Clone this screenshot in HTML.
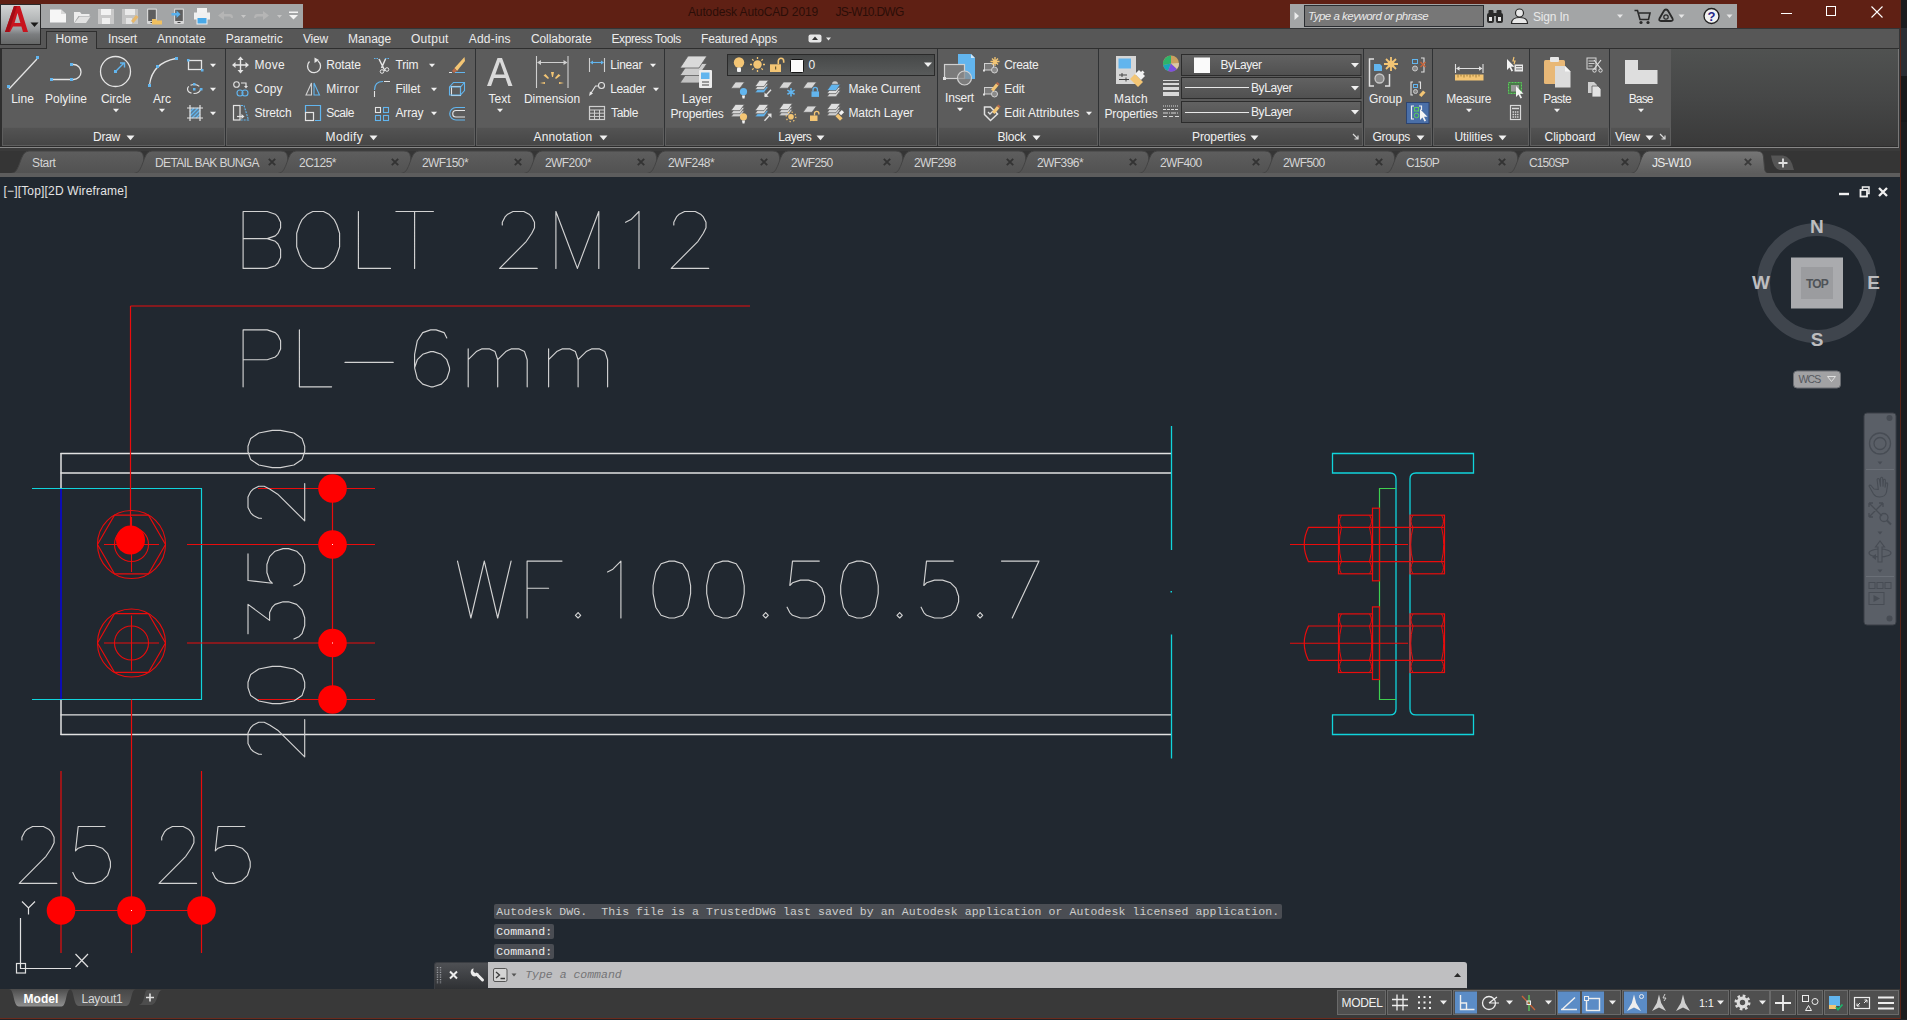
<!DOCTYPE html>
<html><head><meta charset="utf-8"><title>AutoCAD</title>
<style>
html,body{margin:0;padding:0;}
body{width:1907px;height:1020px;overflow:hidden;background:#1b1b1d;font-family:"Liberation Sans",sans-serif;position:relative;}
.t{position:absolute;white-space:pre;font-family:"Liberation Sans",sans-serif;}
.b{position:absolute;display:block;}
#win{position:absolute;left:0;top:0;width:1901px;height:1019px;overflow:hidden;background:#3b3b3b;}
</style></head><body>
<div id="win">
<div class="b" style="left:0px;top:0px;width:1901px;height:28px;background:#5f2014;"></div>
<div class="b" style="left:0px;top:28px;width:1901px;height:20px;background:#575757;border-top:1px solid #333537;box-sizing:border-box;"></div>
<div class="b" style="left:0px;top:4px;width:41px;height:41px;background:linear-gradient(#d2d4d4,#b2b5b6 40%,#9a9da0 62%,#7c7e80 75%,#666868);border:1px solid #2a2a2a;box-sizing:border-box;"></div>
<svg class="b" style="left:4px;top:5px;" width="26" height="30" viewBox="0 0 26 30"><path d="M1 27 L10 1 L16 1 L24 27 L19 27 L13.5 8 L10.5 18 L17 18 L18 21.5 L9 21.5 L6 27 Z" fill="#c8141e"/><path d="M10 1 L13 1 L5 27 L1 27 Z" fill="#a30d16"/></svg>
<svg class="b" style="left:30px;top:22px" width="9" height="6"><path d="M0.5 0.5 L8.5 0.5 L4.5 5 Z" fill="#1a1a1a"/></svg>
<div class="b" style="left:41px;top:4px;width:262px;height:24px;background:#a3a5a6;"></div>
<svg class="b" style="left:0px;top:0px;" width="310" height="30" viewBox="0 0 310 30"><path d="M50 9.500 h11 l5 4.500 v8.500 h-16z" fill="#f6f6f6"/><path d="M61 9.500 v4.500 h5z" fill="#d8d8d8"/><path d="M74 12 h6 l1.5 2 h8 v2 h-11 l-4.5 7z" fill="#ededed"/><path d="M79.500 16.500 h11 l-4.5 6.500 h-11.500z" fill="#e2e2e2"/><path d="M98 9 h16 v15 h-16z" fill="#c9c9c9"/><rect x="101" y="9" width="10" height="6" fill="#f2f2f2"/><rect x="102" y="18" width="8" height="6" fill="#efefef"/><path d="M122 9 h16 v15 h-16z" fill="#c4c4c4"/><rect x="125" y="9" width="10" height="6" fill="#eaeaea"/><rect x="126" y="18" width="6" height="6" fill="#e4e4e4"/><path d="M131 21 l5 -6 l2.500 2 l-5 6z" fill="#e8b86a"/><rect x="147" y="8.500" width="10" height="15.500" rx="1" fill="#d6d6d6"/><rect x="148.200" y="9.700" width="7.600" height="11.300" fill="#5e5e5e"/><rect x="150.500" y="22" width="3" height="1" fill="#444"/><path d="M152 19 h4 l1 1.500 h5 v4 h-10z" fill="#f0c060"/><rect x="174" y="8.500" width="10" height="15.500" rx="1" fill="#d6d6d6"/><rect x="175.200" y="9.700" width="7.600" height="11.300" fill="#5e5e5e"/><rect x="177.500" y="22" width="3" height="1" fill="#444"/><path d="M171.500 13 h5 v-2.500 l4 3.800 l-4 3.800 v-2.500 h-5z" fill="#58b0ec"/><rect x="197" y="8" width="10" height="5" fill="#f2f2f2"/><rect x="194" y="12.500" width="16" height="7" fill="#f0f0f0"/><rect x="197" y="17.500" width="10" height="6.500" fill="#49a9e8" stroke="#f0f0f0" stroke-width="1"/><path d="M218 15.500 l6 -4.500 v3 h6 q3 0 3 4 h-2 q0 -1.500 -1.500 -1.500 h-5.500 v3.500z" fill="#b5b5b5"/><path d="M241 15 l2.500 3 l2.500 -3z" fill="#c6c6c6"/><path d="M269 15.500 l-6 -4.500 v3 h-6 q-3 0 -3 4 h2 q0 -1.500 1.500 -1.500 h5.500 v3.500z" fill="#b5b5b5"/><path d="M277 15 l2.500 3 l2.500 -3z" fill="#c6c6c6"/><rect x="289" y="11.500" width="9" height="1.500" fill="#f4f4f4"/><path d="M289 15 h9 l-4.500 4.500z" fill="#f4f4f4"/></svg>
<span class="t" style="left:688.0px;top:4.6px;font-size:12px;color:#2b0e08;line-height:14.4px;letter-spacing:-0.13px;">Autodesk AutoCAD 2019</span>
<span class="t" style="left:835.5px;top:4.6px;font-size:12px;color:#2b0e08;line-height:14.4px;letter-spacing:-0.73px;">JS-W10.DWG</span>
<div class="b" style="left:1290px;top:4px;width:447px;height:24px;background:#a3a5a6;"></div>
<svg class="b" style="left:1293px;top:11px" width="8" height="10"><path d="M1.500 1 L6 5 L1.500 9z" fill="#ececec"/></svg>
<div class="b" style="left:1304px;top:5px;width:180px;height:22px;background:#777777;border:1px solid #2a2d31;box-sizing:border-box;"></div>
<span class="t" style="left:1308.0px;top:9.9px;font-size:11.5px;color:#e9e9e9;line-height:13.8px;letter-spacing:-0.50px;font-style:italic;">Type a keyword or phrase</span>
<svg class="b" style="left:0px;top:0px;" width="1760" height="30" viewBox="0 0 1760 30"><g fill="#2a2a2a"><rect x="1488.500" y="10" width="5" height="4" rx="1"/><rect x="1496.500" y="10" width="5" height="4" rx="1"/><rect x="1487" y="13" width="7" height="10" rx="2"/><rect x="1496" y="13" width="7" height="10" rx="2"/><rect x="1493" y="13" width="4" height="3"/></g><rect x="1489" y="17" width="3" height="4" fill="#e8e8e8"/><rect x="1498" y="17" width="3" height="4" fill="#e8e8e8"/><circle cx="1519.500" cy="13" r="4" fill="#e8e8e8" stroke="#2a2a2a" stroke-width="1.200"/><path d="M1511.500 23.500 q0 -6 8 -6 q8 0 8 6z" fill="#e8e8e8" stroke="#2a2a2a" stroke-width="1.200"/><path d="M1634.500 10.500 h3 l2.500 9 h8.500 l1.500 -6.500 h-11" fill="none" stroke="#2a2a2a" stroke-width="1.600"/><circle cx="1641" cy="22.500" r="1.600" fill="#2a2a2a"/><circle cx="1648" cy="22.500" r="1.600" fill="#2a2a2a"/><path d="M1666 9.500 q-1.500 0 -2.500 2 l-4 7 q-1 2.500 1.500 2.500 h10 q2.500 0 1.500 -2.500 l-4 -7 q-1 -2 -2.500 -2z" fill="none" stroke="#2a2a2a" stroke-width="1.800"/><circle cx="1666" cy="17" r="2.200" fill="none" stroke="#2a2a2a" stroke-width="1.200"/><circle cx="1711.500" cy="16" r="7.500" fill="#f2f2f2" stroke="#1f1f1f" stroke-width="1.300"/><path d="M1617 14.500 h6 l-3 3.500z" fill="#e6e6e6"/><path d="M1678.5 14.500 h6 l-3 3.500z" fill="#e6e6e6"/><path d="M1726.5 14.500 h6 l-3 3.500z" fill="#e6e6e6"/></svg>
<span class="t" style="left:1707.5px;top:9.0px;font-size:13px;color:#25258a;line-height:15.6px;font-weight:bold;">?</span>
<span class="t" style="left:1533.0px;top:9.6px;font-size:12px;color:#e9e9e9;line-height:14.4px;letter-spacing:-0.19px;">Sign In</span>
<svg class="b" style="left:1770px;top:0px;" width="130" height="28" viewBox="0 0 130 28"><path d="M11 13.500 h11" stroke="#fff" stroke-width="1"/><rect x="56.500" y="6.500" width="9" height="9" fill="none" stroke="#fff" stroke-width="1"/><path d="M101.500 6.500 l11 11 M112.500 6.500 l-11 11" stroke="#fff" stroke-width="1.100"/></svg>
<div class="b" style="left:46px;top:31px;width:51px;height:18px;background:#5c5c5c;border:1px solid #2e2e2e;border-bottom:none;box-sizing:border-box;"></div>
<span class="t" style="left:55.5px;top:31.6px;font-size:12px;color:#ececec;line-height:14.4px;letter-spacing:0.12px;">Home</span>
<span class="t" style="left:108.0px;top:31.6px;font-size:12px;color:#ececec;line-height:14.4px;letter-spacing:-0.17px;">Insert</span>
<span class="t" style="left:157.0px;top:31.6px;font-size:12px;color:#ececec;line-height:14.4px;letter-spacing:0.08px;">Annotate</span>
<span class="t" style="left:225.8px;top:31.6px;font-size:12px;color:#ececec;line-height:14.4px;letter-spacing:-0.13px;">Parametric</span>
<span class="t" style="left:303.0px;top:31.6px;font-size:12px;color:#ececec;line-height:14.4px;letter-spacing:-0.25px;">View</span>
<span class="t" style="left:348.0px;top:31.6px;font-size:12px;color:#ececec;line-height:14.4px;letter-spacing:-0.06px;">Manage</span>
<span class="t" style="left:411.0px;top:31.6px;font-size:12px;color:#ececec;line-height:14.4px;letter-spacing:0.28px;">Output</span>
<span class="t" style="left:468.8px;top:31.6px;font-size:12px;color:#ececec;line-height:14.4px;letter-spacing:0.19px;">Add-ins</span>
<span class="t" style="left:530.9px;top:31.6px;font-size:12px;color:#ececec;line-height:14.4px;letter-spacing:-0.06px;">Collaborate</span>
<span class="t" style="left:611.4px;top:31.6px;font-size:12px;color:#ececec;line-height:14.4px;letter-spacing:-0.38px;">Express Tools</span>
<span class="t" style="left:701.0px;top:31.6px;font-size:12px;color:#ececec;line-height:14.4px;letter-spacing:-0.16px;">Featured Apps</span>
<svg class="b" style="left:806px;top:33px;" width="30" height="12" viewBox="0 0 30 12"><rect x="2.500" y="1.500" width="13" height="8" rx="2" fill="#e6e6e6"/><path d="M6 7 l3 -3.500 l3 3.500z" fill="#333"/><path d="M20 4.500 h5 l-2.500 3z" fill="#e6e6e6"/></svg>
<div class="b" style="left:0px;top:48px;width:1901px;height:100px;background:linear-gradient(#505251,#464747 50%,#393939);"></div>
<div class="b" style="left:0px;top:48px;width:1901px;height:1px;background:#2e2e2e;"></div>
<div class="b" style="left:0px;top:146px;width:1901px;height:1px;background:#2c2c2c;"></div>
<div class="b" style="left:0px;top:147px;width:1901px;height:1px;background:#878787;"></div>
<div class="b" style="left:0px;top:148px;width:1901px;height:3px;background:#3a3a3a;"></div>
<div class="b" style="left:0px;top:48px;width:2px;height:99px;background:#2e2e2e;"></div>
<div class="b" style="left:1898px;top:49px;width:1px;height:98px;background:#787878;"></div>
<div class="b" style="left:1899px;top:28px;width:1px;height:120px;background:#333537;"></div>
<div class="b" style="left:2px;top:49px;width:223px;height:78px;background:#5c5c5c;"></div>
<div class="b" style="left:2px;top:127px;width:223px;height:19px;background:linear-gradient(#535353,#464646);border:1px solid #5e5e5e;border-top:1px solid #5a5a5a;box-sizing:border-box;"></div>
<div class="b" style="left:225px;top:49px;width:1px;height:97px;background:#303234;"></div>
<span class="t" style="left:93.0px;top:129.6px;font-size:12px;color:#f0f0f0;line-height:14.4px;letter-spacing:-0.25px;">Draw</span>
<svg class="b" style="left:125.5px;top:134.5px" width="9" height="6" viewBox="0 0 9 6"><path d="M0.5 0.6 L8.5 0.6 L4.5 5.2 Z" fill="#f0f0f0"/></svg>
<div class="b" style="left:226px;top:49px;width:249px;height:78px;background:#5c5c5c;"></div>
<div class="b" style="left:226px;top:127px;width:249px;height:19px;background:linear-gradient(#535353,#464646);border:1px solid #5e5e5e;border-top:1px solid #5a5a5a;box-sizing:border-box;"></div>
<div class="b" style="left:475px;top:49px;width:1px;height:97px;background:#303234;"></div>
<span class="t" style="left:325.5px;top:129.6px;font-size:12px;color:#f0f0f0;line-height:14.4px;letter-spacing:0.38px;">Modify</span>
<svg class="b" style="left:368.8px;top:134.5px" width="9" height="6" viewBox="0 0 9 6"><path d="M0.5 0.6 L8.5 0.6 L4.5 5.2 Z" fill="#f0f0f0"/></svg>
<div class="b" style="left:476px;top:49px;width:188px;height:78px;background:#5c5c5c;"></div>
<div class="b" style="left:476px;top:127px;width:188px;height:19px;background:linear-gradient(#535353,#464646);border:1px solid #5e5e5e;border-top:1px solid #5a5a5a;box-sizing:border-box;"></div>
<div class="b" style="left:664px;top:49px;width:1px;height:97px;background:#303234;"></div>
<span class="t" style="left:533.6px;top:129.6px;font-size:12px;color:#f0f0f0;line-height:14.4px;letter-spacing:0.13px;">Annotation</span>
<svg class="b" style="left:598.7px;top:134.5px" width="9" height="6" viewBox="0 0 9 6"><path d="M0.5 0.6 L8.5 0.6 L4.5 5.2 Z" fill="#f0f0f0"/></svg>
<div class="b" style="left:665px;top:49px;width:272px;height:78px;background:#5c5c5c;"></div>
<div class="b" style="left:665px;top:127px;width:272px;height:19px;background:linear-gradient(#535353,#464646);border:1px solid #5e5e5e;border-top:1px solid #5a5a5a;box-sizing:border-box;"></div>
<div class="b" style="left:937px;top:49px;width:1px;height:97px;background:#303234;"></div>
<span class="t" style="left:778.3px;top:129.6px;font-size:12px;color:#f0f0f0;line-height:14.4px;letter-spacing:-0.50px;">Layers</span>
<svg class="b" style="left:816px;top:134.5px" width="9" height="6" viewBox="0 0 9 6"><path d="M0.5 0.6 L8.5 0.6 L4.5 5.2 Z" fill="#f0f0f0"/></svg>
<div class="b" style="left:938px;top:49px;width:160px;height:78px;background:#5c5c5c;"></div>
<div class="b" style="left:938px;top:127px;width:160px;height:19px;background:linear-gradient(#535353,#464646);border:1px solid #5e5e5e;border-top:1px solid #5a5a5a;box-sizing:border-box;"></div>
<div class="b" style="left:1098px;top:49px;width:1px;height:97px;background:#303234;"></div>
<span class="t" style="left:997.4px;top:129.6px;font-size:12px;color:#f0f0f0;line-height:14.4px;letter-spacing:-0.17px;">Block</span>
<svg class="b" style="left:1031.5px;top:134.5px" width="9" height="6" viewBox="0 0 9 6"><path d="M0.5 0.6 L8.5 0.6 L4.5 5.2 Z" fill="#f0f0f0"/></svg>
<div class="b" style="left:1099px;top:49px;width:264px;height:78px;background:#5c5c5c;"></div>
<div class="b" style="left:1099px;top:127px;width:264px;height:19px;background:linear-gradient(#535353,#464646);border:1px solid #5e5e5e;border-top:1px solid #5a5a5a;box-sizing:border-box;"></div>
<div class="b" style="left:1363px;top:49px;width:1px;height:97px;background:#303234;"></div>
<span class="t" style="left:1192.0px;top:129.6px;font-size:12px;color:#f0f0f0;line-height:14.4px;letter-spacing:-0.10px;">Properties</span>
<svg class="b" style="left:1250.3px;top:134.5px" width="9" height="6" viewBox="0 0 9 6"><path d="M0.5 0.6 L8.5 0.6 L4.5 5.2 Z" fill="#f0f0f0"/></svg>
<div class="b" style="left:1364px;top:49px;width:68px;height:78px;background:#5c5c5c;"></div>
<div class="b" style="left:1364px;top:127px;width:68px;height:19px;background:linear-gradient(#535353,#464646);border:1px solid #5e5e5e;border-top:1px solid #5a5a5a;box-sizing:border-box;"></div>
<div class="b" style="left:1432px;top:49px;width:1px;height:97px;background:#303234;"></div>
<span class="t" style="left:1372.5px;top:129.6px;font-size:12px;color:#f0f0f0;line-height:14.4px;letter-spacing:-0.31px;">Groups</span>
<svg class="b" style="left:1415.5px;top:134.5px" width="9" height="6" viewBox="0 0 9 6"><path d="M0.5 0.6 L8.5 0.6 L4.5 5.2 Z" fill="#f0f0f0"/></svg>
<div class="b" style="left:1433px;top:49px;width:96px;height:78px;background:#5c5c5c;"></div>
<div class="b" style="left:1433px;top:127px;width:96px;height:19px;background:linear-gradient(#535353,#464646);border:1px solid #5e5e5e;border-top:1px solid #5a5a5a;box-sizing:border-box;"></div>
<div class="b" style="left:1529px;top:49px;width:1px;height:97px;background:#303234;"></div>
<span class="t" style="left:1454.4px;top:129.6px;font-size:12px;color:#f0f0f0;line-height:14.4px;letter-spacing:-0.03px;">Utilities</span>
<svg class="b" style="left:1498.3px;top:134.5px" width="9" height="6" viewBox="0 0 9 6"><path d="M0.5 0.6 L8.5 0.6 L4.5 5.2 Z" fill="#f0f0f0"/></svg>
<div class="b" style="left:1530px;top:49px;width:79px;height:78px;background:#5c5c5c;"></div>
<div class="b" style="left:1530px;top:127px;width:79px;height:19px;background:linear-gradient(#535353,#464646);border:1px solid #5e5e5e;border-top:1px solid #5a5a5a;box-sizing:border-box;"></div>
<div class="b" style="left:1609px;top:49px;width:1px;height:97px;background:#303234;"></div>
<span class="t" style="left:1544.5px;top:129.6px;font-size:12px;color:#f0f0f0;line-height:14.4px;letter-spacing:-0.04px;">Clipboard</span>
<div class="b" style="left:1610px;top:49px;width:61px;height:78px;background:#5c5c5c;"></div>
<div class="b" style="left:1610px;top:127px;width:61px;height:19px;background:linear-gradient(#535353,#464646);border:1px solid #5e5e5e;border-top:1px solid #5a5a5a;box-sizing:border-box;"></div>
<span class="t" style="left:1615.0px;top:129.6px;font-size:12px;color:#f0f0f0;line-height:14.4px;letter-spacing:-0.27px;">View</span>
<svg class="b" style="left:1645.3px;top:134.5px" width="9" height="6" viewBox="0 0 9 6"><path d="M0.5 0.6 L8.5 0.6 L4.5 5.2 Z" fill="#f0f0f0"/></svg>
<svg class="b" style="left:1352px;top:133px;" width="8" height="8" viewBox="0 0 8 8"><path d="M1 1 L6 6 M6 2.500 V6 H2.500" stroke="#d8d8d8" stroke-width="1.200" fill="none"/></svg>
<svg class="b" style="left:1659px;top:133px;" width="8" height="8" viewBox="0 0 8 8"><path d="M1 1 L6 6 M6 2.500 V6 H2.500" stroke="#d8d8d8" stroke-width="1.200" fill="none"/></svg>
<div class="b" style="left:47px;top:47px;width:49px;height:2px;background:#5c5c5c;"></div>
<svg class="b" style="left:0px;top:0px;" width="224" height="128" viewBox="0 0 224 128"><path d="M9 89 L37 59" stroke="#e4e4e4" stroke-width="1.300"/><rect x="7" y="85" width="3" height="3" fill="#62b5ee"/><rect x="36" y="56" width="3" height="3" fill="#62b5ee"/><path d="M52 79.500 H71 M71.500 64.500 h2 a7.500 7.500 0 0 1 0 15 h-2" stroke="#e4e4e4" stroke-width="1.300" fill="none"/><rect x="50" y="78" width="3" height="3" fill="#62b5ee"/><rect x="70" y="78" width="3" height="3" fill="#62b5ee"/><rect x="70" y="63" width="3" height="3" fill="#62b5ee"/><circle cx="115.500" cy="71.500" r="15" stroke="#e4e4e4" stroke-width="1.300" fill="none"/><path d="M116 71 L124 63 M120 63 h4.500 v4.500" stroke="#62b5ee" stroke-width="1.400" fill="none"/><rect x="114" y="70" width="3" height="3" fill="#62b5ee"/><path d="M149.500 85 Q152 63 176 58.500" stroke="#e4e4e4" stroke-width="1.300" fill="none"/><rect x="148" y="84" width="3" height="3" fill="#62b5ee"/><rect x="156" y="65" width="3" height="3" fill="#62b5ee"/><rect x="175" y="57" width="3" height="3" fill="#62b5ee"/><rect x="188.500" y="60.500" width="13" height="9" stroke="#e4e4e4" stroke-width="1.300" fill="none"/><rect x="187" y="59" width="2.500" height="2.500" fill="#62b5ee"/><rect x="201" y="69" width="2.500" height="2.500" fill="#62b5ee"/><ellipse cx="194" cy="89" rx="6.500" ry="4.500" stroke="#e4e4e4" stroke-width="1.200" fill="none" stroke-dasharray="9 2"/><rect x="193" y="83" width="2.500" height="2.500" fill="#62b5ee"/><rect x="193" y="88" width="2.500" height="2.500" fill="#62b5ee"/><rect x="200" y="88" width="2.500" height="2.500" fill="#62b5ee"/><rect x="190" y="108" width="10" height="10" fill="#5f7d94"/><path d="M190 112 l4 -4 M190 116 l8 -8 M192 118 l8 -8 M196 118 l4 -4" stroke="#62b5ee" stroke-width="1.300"/><path d="M187 108 h16 M187 118 h16 M190 105 v16 M200 105 v16" stroke="#e4e4e4" stroke-width="1.200"/></svg>
<span class="t" style="left:11.2px;top:91.6px;font-size:12px;color:#f0f0f0;line-height:14.4px;">Line</span>
<span class="t" style="left:45.0px;top:91.6px;font-size:12px;color:#f0f0f0;line-height:14.4px;letter-spacing:-0.00px;">Polyline</span>
<span class="t" style="left:101.0px;top:91.6px;font-size:12px;color:#f0f0f0;line-height:14.4px;letter-spacing:-0.11px;">Circle</span>
<span class="t" style="left:153.0px;top:91.6px;font-size:12px;color:#f0f0f0;line-height:14.4px;">Arc</span>
<svg class="b" style="left:111.5px;top:108px" width="8" height="5" viewBox="0 0 8 5"><path d="M1 0.8 L7 0.8 L4 4.2 Z" fill="#f0f0f0"/></svg>
<svg class="b" style="left:157.5px;top:108px" width="8" height="5" viewBox="0 0 8 5"><path d="M1 0.8 L7 0.8 L4 4.2 Z" fill="#f0f0f0"/></svg>
<svg class="b" style="left:208.5px;top:63px" width="8" height="5" viewBox="0 0 8 5"><path d="M1 0.8 L7 0.8 L4 4.2 Z" fill="#f0f0f0"/></svg>
<svg class="b" style="left:208.5px;top:87px" width="8" height="5" viewBox="0 0 8 5"><path d="M1 0.8 L7 0.8 L4 4.2 Z" fill="#f0f0f0"/></svg>
<svg class="b" style="left:208.5px;top:111px" width="8" height="5" viewBox="0 0 8 5"><path d="M1 0.8 L7 0.8 L4 4.2 Z" fill="#f0f0f0"/></svg>
<svg class="b" style="left:0px;top:0px;" width="480" height="128" viewBox="0 0 480 128"><path d="M240.500 58 v14 M233.500 65 h14" stroke="#e4e4e4" stroke-width="1.400"/><path d="M240.500 56.500 l-3 3.500 h6z M240.500 73.500 l-3 -3.500 h6z M232 65 l3.500 -3 v6z M249 65 l-3.500 -3 v6z" fill="#e4e4e4"/><circle cx="236.500" cy="84.500" r="2.800" stroke="#e4e4e4" stroke-width="1.100" fill="none"/><path d="M241 83 h5 v3.500" stroke="#e4e4e4" stroke-width="1.200" fill="none"/><path d="M246 88.500 l-2 -2.500 h4z" fill="#e4e4e4"/><circle cx="240" cy="93" r="3" stroke="#62b5ee" stroke-width="1.100" fill="none"/><circle cx="245" cy="93" r="3" stroke="#62b5ee" stroke-width="1.100" fill="none"/><rect x="233.500" y="105.500" width="6.500" height="14.500" stroke="#e4e4e4" stroke-width="1.200" fill="none"/><path d="M241 105.500 h3 l4.500 14.500 h-7.500" stroke="#62b5ee" stroke-width="1.100" fill="none" stroke-dasharray="2 1"/><path d="M237 116.500 h5" stroke="#e4e4e4" stroke-width="1.200"/><path d="M244.500 116.500 l-3 -2.500 v5z" fill="#e4e4e4"/><path d="M318 60 a6.500 6.500 0 1 1 -8.500 0.500" stroke="#e4e4e4" stroke-width="1.300" fill="none" transform="translate(0 1)"/><path d="M314.500 57.500 l4.500 2.500 l-4.500 3z" fill="#e4e4e4"/><path d="M311.500 83 v12 h-5.500z" stroke="#cfcfcf" stroke-width="1.100" fill="none"/><path d="M314 83 v12 h5.500z" stroke="#62b5ee" stroke-width="1.100" fill="none"/><path d="M305.500 112 v-6.500 h15 v15 h-5.500" stroke="#62b5ee" stroke-width="1.200" fill="none"/><rect x="305.500" y="112.500" width="8" height="8" stroke="#e4e4e4" stroke-width="1.200" fill="none"/><path d="M374 58.500 h5 M385 58.500 h5" stroke="#62b5ee" stroke-width="1.100" stroke-dasharray="1.500 1"/><path d="M379 59 l6 12 M385.500 59 l-4 9" stroke="#e4e4e4" stroke-width="1.500" fill="none"/><circle cx="382" cy="71.500" r="1.800" stroke="#e4e4e4" stroke-width="1" fill="none"/><circle cx="387" cy="69.500" r="1.800" stroke="#e4e4e4" stroke-width="1" fill="none"/><path d="M374.500 90 q0 -8.500 8.500 -8.500" stroke="#62b5ee" stroke-width="1.200" fill="none"/><path d="M384 81.500 h6 M374.500 91 v6" stroke="#e4e4e4" stroke-width="1.100"/><rect x="375.500" y="107.500" width="5" height="5" stroke="#e4e4e4" stroke-width="1.100" fill="none"/><rect x="383.500" y="107.500" width="5" height="5" stroke="#62b5ee" stroke-width="1.100" fill="none"/><rect x="375.500" y="115.500" width="5" height="5" stroke="#62b5ee" stroke-width="1.100" fill="none"/><rect x="383.500" y="115.500" width="5" height="5" stroke="#62b5ee" stroke-width="1.100" fill="none"/><path d="M464.500 57 l-10 11 l2.500 3 l8 -10z" fill="#f3c574"/><path d="M454.500 68 l2.500 3 l-3 2 l-2 -2z" fill="#b86a4a"/><path d="M449 72.500 h3" stroke="#e4e4e4" stroke-width="1"/><path d="M455 72.500 h10" stroke="#62b5ee" stroke-width="1"/><rect x="451.500" y="86.500" width="9" height="9" stroke="#e4e4e4" stroke-width="1.100" fill="none"/><path d="M449.500 95 v-8 l4 -4.500 h11 v8 l-4 4.500z M453.500 82.500 M449.500 87 h11 l4 -4.500 M460.500 87 v8.500" stroke="#62b5ee" stroke-width="1.100" fill="none"/><path d="M465 107.500 h-9 a6 6 0 0 0 0 12.500 h9" stroke="#62b5ee" stroke-width="1.200" fill="none"/><path d="M465 110.500 h-9 a3 3 0 0 0 0 6.500 h9" stroke="#e4e4e4" stroke-width="1.200" fill="none"/></svg>
<span class="t" style="left:254.4px;top:58.1px;font-size:12px;color:#f0f0f0;line-height:14.4px;letter-spacing:0.29px;">Move</span>
<span class="t" style="left:254.4px;top:82.1px;font-size:12px;color:#f0f0f0;line-height:14.4px;letter-spacing:-0.00px;">Copy</span>
<span class="t" style="left:254.4px;top:106.1px;font-size:12px;color:#f0f0f0;line-height:14.4px;letter-spacing:-0.14px;">Stretch</span>
<span class="t" style="left:326.3px;top:58.1px;font-size:12px;color:#f0f0f0;line-height:14.4px;letter-spacing:-0.14px;">Rotate</span>
<span class="t" style="left:326.3px;top:82.1px;font-size:12px;color:#f0f0f0;line-height:14.4px;letter-spacing:0.28px;">Mirror</span>
<span class="t" style="left:326.3px;top:106.1px;font-size:12px;color:#f0f0f0;line-height:14.4px;letter-spacing:-0.50px;">Scale</span>
<span class="t" style="left:395.4px;top:58.1px;font-size:12px;color:#f0f0f0;line-height:14.4px;letter-spacing:-0.14px;">Trim</span>
<span class="t" style="left:395.4px;top:82.1px;font-size:12px;color:#f0f0f0;line-height:14.4px;letter-spacing:-0.06px;">Fillet</span>
<span class="t" style="left:395.4px;top:106.1px;font-size:12px;color:#f0f0f0;line-height:14.4px;letter-spacing:-0.13px;">Array</span>
<svg class="b" style="left:427.5px;top:63px" width="8" height="5" viewBox="0 0 8 5"><path d="M1 0.8 L7 0.8 L4 4.2 Z" fill="#f0f0f0"/></svg>
<svg class="b" style="left:429.5px;top:87px" width="8" height="5" viewBox="0 0 8 5"><path d="M1 0.8 L7 0.8 L4 4.2 Z" fill="#f0f0f0"/></svg>
<svg class="b" style="left:429.5px;top:111px" width="8" height="5" viewBox="0 0 8 5"><path d="M1 0.8 L7 0.8 L4 4.2 Z" fill="#f0f0f0"/></svg>
<svg class="b" style="left:0px;top:0px;" width="670" height="128" viewBox="0 0 670 128"><path d="M487 86 L497.500 58 h4.500 L512.500 86 h-4.200 l-2.800 -8 h-11.600 l-2.800 8z M495.300 74.500 h9.200 l-4.600 -12.800z" fill="#d9d9d9" fill-rule="evenodd"/><path d="M536.500 56 v32 M568 56 v32 M538 62.500 h28.500" stroke="#cfcfcf" stroke-width="1.100"/><path d="M537 62.500 l4 -2.500 v5z M567.500 62.500 l-4 -2.500 v5z" fill="#cfcfcf"/><g fill="#f3c574"><path d="M551 72 l1 5 h1 l1 -5z"/><path d="M543.500 75.500 l4.500 3.500 l1 -1 l-3.500 -4z"/><path d="M560.500 75.500 l-4.500 3.500 l-1 -1 l3.500 -4z"/><path d="M540 83 l5 -1 v2z"/><path d="M564 83 l-5 -1 v2z"/></g><path d="M589.500 58 v14 M604.500 58 v14" stroke="#cfcfcf" stroke-width="1.100"/><path d="M591 62.500 h12" stroke="#62b5ee" stroke-width="1.100"/><path d="M590 62.500 l3 -2 v4z M604 62.500 l-3 -2 v4z" fill="#62b5ee"/><circle cx="601.500" cy="85.500" r="3" stroke="#e4e4e4" stroke-width="1.100" fill="none"/><path d="M598.500 86 h-3 l-5 8" stroke="#e4e4e4" stroke-width="1.100" fill="none"/><path d="M589 96 l1 -4.500 l3 2z" fill="#e4e4e4"/><rect x="589.500" y="106.500" width="15" height="13" stroke="#cfcfcf" stroke-width="1.200" fill="none"/><path d="M589.500 110 h15 M589.500 113.200 h15 M589.500 116.400 h15 M594.500 110 v9.500 M599.500 110 v9.500" stroke="#cfcfcf" stroke-width="1"/></svg>
<span class="t" style="left:488.5px;top:91.6px;font-size:12px;color:#f0f0f0;line-height:14.4px;">Text</span>
<span class="t" style="left:524.0px;top:91.6px;font-size:12px;color:#f0f0f0;line-height:14.4px;letter-spacing:-0.08px;">Dimension</span>
<span class="t" style="left:610.3px;top:58.1px;font-size:12px;color:#f0f0f0;line-height:14.4px;letter-spacing:-0.23px;">Linear</span>
<span class="t" style="left:610.3px;top:82.1px;font-size:12px;color:#f0f0f0;line-height:14.4px;letter-spacing:-0.39px;">Leader</span>
<span class="t" style="left:611.0px;top:106.1px;font-size:12px;color:#f0f0f0;line-height:14.4px;letter-spacing:-0.34px;">Table</span>
<svg class="b" style="left:495.5px;top:108px" width="8" height="5" viewBox="0 0 8 5"><path d="M1 0.8 L7 0.8 L4 4.2 Z" fill="#f0f0f0"/></svg>
<svg class="b" style="left:648.5px;top:63px" width="8" height="5" viewBox="0 0 8 5"><path d="M1 0.8 L7 0.8 L4 4.2 Z" fill="#f0f0f0"/></svg>
<svg class="b" style="left:651.5px;top:87px" width="8" height="5" viewBox="0 0 8 5"><path d="M1 0.8 L7 0.8 L4 4.2 Z" fill="#f0f0f0"/></svg>
<svg class="b" style="left:0px;top:0px;" width="940" height="128" viewBox="0 0 940 128"><defs><linearGradient id="lg" x1="0" y1="0" x2="0" y2="1"><stop offset="0" stop-color="#464848"/><stop offset="1" stop-color="#595b5b"/></linearGradient></defs><path d="M680 83 l8 -12 h19 l-8 12z" fill="#c2c2c2" stroke="#5c5c5c" stroke-width="0.800"/><path d="M680 75.5 l8 -12 h19 l-8 12z" fill="#cdcdcd" stroke="#5c5c5c" stroke-width="0.800"/><path d="M680 68 l8 -12 h19 l-8 12z" fill="#dadada" stroke="#5c5c5c" stroke-width="0.800"/><rect x="699" y="70" width="13" height="18" rx="1" fill="#ececec"/><rect x="701" y="72.500" width="8.500" height="6.500" fill="#62b5ee"/><path d="M702 82 h7 M702 85 h7" stroke="#444" stroke-width="1"/><rect x="727.500" y="54.500" width="207" height="21" fill="url(#lg)" stroke="#2a2a2a"/><circle cx="739" cy="62.500" r="5.200" fill="#f3c574"/><rect x="737" y="67.500" width="4" height="4.500" rx="1" fill="#f2f2f2"/><circle cx="757.500" cy="64.500" r="4.200" fill="#f3c574"/><path d="M757.500 57 v2 M757.500 70 v2 M750 64.500 h2 M763 64.500 h2 M752.200 59.200 l1.400 1.400 M761.400 68.400 l1.400 1.400 M762.800 59.200 l-1.400 1.400 M753.600 68.400 l-1.400 1.400" stroke="#f3c574" stroke-width="1.300"/><rect x="770" y="64.300" width="11" height="7.700" fill="#f3c574"/><rect x="775" y="66.500" width="1.200" height="3" fill="#6a5a30"/><path d="M778.300 64.300 v-3.300 a2.700 2.700 0 0 1 5.400 0 v1.700" stroke="#f3c574" stroke-width="1.600" fill="none"/><rect x="790.500" y="59.500" width="13" height="13" rx="1" fill="#fbfbfb" stroke="#151515" stroke-width="1"/><path d="M924 62.500 h8 l-4 4.500z" fill="#f0f0f0"/><path d="M731 88.2 l4.500 -6.200 h9 l-4.500 6.200z" fill="#d6d6d6" stroke="#5c5c5c" stroke-width="0.700"/><circle cx="743.5" cy="91.7" r="3.600" fill="#62b5ee"/><path d="M742 95.5 h3 l-0.500 3 h-2z" fill="#f2f2f2"/><path d="M755 92.7 l4.500 -6.200 h9 l-4.500 6.200z" fill="#62b5ee" stroke="#5c5c5c" stroke-width="0.700"/><path d="M755 89.6 l4.500 -6.200 h9 l-4.500 6.200z" fill="#d6d6d6" stroke="#5c5c5c" stroke-width="0.700"/><path d="M755 86.5 l4.500 -6.200 h9 l-4.500 6.200z" fill="#dedede" stroke="#5c5c5c" stroke-width="0.700"/><path d="M771 89.7 l-6 6.500" stroke="#e4e4e4" stroke-width="1.300"/><path d="M764.5 97 v-4.500 l4.200 4.200z" fill="#e4e4e4"/><path d="M779 88.2 l4.500 -6.200 h9 l-4.500 6.200z" fill="#d6d6d6" stroke="#5c5c5c" stroke-width="0.700"/><path d="M791 88 v8.400 M787.4 90.1 l7.200 4.200 M787.4 94.3 l7.200 -4.200" stroke="#62b5ee" stroke-width="1.600"/><path d="M803 88.2 l4.500 -6.200 h9 l-4.500 6.200z" fill="#d6d6d6" stroke="#5c5c5c" stroke-width="0.700"/><rect x="811.5" y="91.4" width="7.500" height="5.500" fill="#62b5ee"/><path d="M813.05 91.6 v-2 a2.200 2.200 0 0 1 4.400 0 v2" stroke="#62b5ee" stroke-width="1.300" fill="none"/><circle cx="835" cy="84.2" r="3" fill="#c9c9c9"/><path d="M827 96.7 l4.500 -6.200 h9 l-4.500 6.200z" fill="#d6d6d6" stroke="#5c5c5c" stroke-width="0.700"/><path d="M827 93.6 l4.500 -6.200 h9 l-4.500 6.200z" fill="#dedede" stroke="#5c5c5c" stroke-width="0.700"/><path d="M827 90.5 l4.500 -6.200 h9 l-4.500 6.200z" fill="#62b5ee" stroke="#5c5c5c" stroke-width="0.700"/><path d="M731 116.8 l4.500 -6.200 h9 l-4.500 6.200z" fill="#cfcfcf" stroke="#5c5c5c" stroke-width="0.700"/><path d="M731 113.7 l4.500 -6.200 h9 l-4.500 6.200z" fill="#d6d6d6" stroke="#5c5c5c" stroke-width="0.700"/><path d="M731 110.6 l4.500 -6.200 h9 l-4.500 6.200z" fill="#dedede" stroke="#5c5c5c" stroke-width="0.700"/><circle cx="743.5" cy="116.8" r="3.600" fill="#f3c574"/><path d="M742 120.6 h3 l-0.500 3 h-2z" fill="#f2f2f2"/><path d="M755 116.8 l4.500 -6.200 h9 l-4.500 6.200z" fill="#62b5ee" stroke="#5c5c5c" stroke-width="0.700"/><path d="M755 113.7 l4.500 -6.200 h9 l-4.500 6.200z" fill="#d6d6d6" stroke="#5c5c5c" stroke-width="0.700"/><path d="M755 110.6 l4.500 -6.200 h9 l-4.500 6.200z" fill="#dedede" stroke="#5c5c5c" stroke-width="0.700"/><path d="M764.5 120.8 l6 -6.500" stroke="#e4e4e4" stroke-width="1.300"/><path d="M771.5 113.5 v4.500 l-4.200 -4.200z" fill="#e4e4e4"/><path d="M779 115.8 l4.500 -6.200 h9 l-4.500 6.200z" fill="#cfcfcf" stroke="#5c5c5c" stroke-width="0.700"/><path d="M779 112.7 l4.500 -6.200 h9 l-4.500 6.200z" fill="#d6d6d6" stroke="#5c5c5c" stroke-width="0.700"/><path d="M779 109.6 l4.500 -6.200 h9 l-4.500 6.200z" fill="#dedede" stroke="#5c5c5c" stroke-width="0.700"/><circle cx="791" cy="116.8" r="2.800" fill="#f3c574"/><circle cx="791" cy="116.8" r="4.800" fill="none" stroke="#f3c574" stroke-width="1.300" stroke-dasharray="1.300 2.470"/><path d="M803 112.3 l4.500 -6.200 h9 l-4.500 6.200z" fill="#d6d6d6" stroke="#5c5c5c" stroke-width="0.700"/><rect x="810" y="115.5" width="7.500" height="5.500" fill="#f3c574"/><path d="M814.5 115.5 v-2 a2.200 2.200 0 0 1 4.400 0 v1" stroke="#f3c574" stroke-width="1.300" fill="none"/><path d="M827 115.8 l4.500 -6.200 h9 l-4.500 6.200z" fill="#cfcfcf" stroke="#5c5c5c" stroke-width="0.700"/><path d="M827 112.7 l4.500 -6.200 h9 l-4.500 6.200z" fill="#d6d6d6" stroke="#5c5c5c" stroke-width="0.700"/><path d="M827 109.6 l4.500 -6.200 h9 l-4.500 6.200z" fill="#dedede" stroke="#5c5c5c" stroke-width="0.700"/><path d="M835.5 116.3 l4.500 4.500 l2.600 -2.600 l-4.500 -4.500z" fill="#f3c574"/><path d="M838.8 113 l3 -3 l2.300 2.300 l-3 3z" fill="#f4f4f4"/></svg>
<span class="t" style="left:808.5px;top:58.1px;font-size:12px;color:#f0f0f0;line-height:14.4px;">0</span>
<span class="t" style="left:682.0px;top:92.1px;font-size:12px;color:#f0f0f0;line-height:14.4px;">Layer</span>
<span class="t" style="left:670.5px;top:107.1px;font-size:12px;color:#f0f0f0;line-height:14.4px;letter-spacing:-0.17px;">Properties</span>
<span class="t" style="left:848.4px;top:82.1px;font-size:12px;color:#f0f0f0;line-height:14.4px;letter-spacing:-0.06px;">Make Current</span>
<span class="t" style="left:848.4px;top:106.1px;font-size:12px;color:#f0f0f0;line-height:14.4px;letter-spacing:-0.09px;">Match Layer</span>
<svg class="b" style="left:0px;top:0px;" width="1100" height="128" viewBox="0 0 1100 128"><path d="M958 54 h13 l4 4 v21 h-17z" fill="#62b5ee"/><path d="M971 54 v4 h4z" fill="#cfe6f8"/><rect x="944.500" y="64.500" width="20" height="14" fill="#7a7a7a" stroke="#d0d0d0" stroke-width="1.200"/><circle cx="964.500" cy="78" r="7" fill="#8a8a8a" fill-opacity="0.7" stroke="#d0d0d0" stroke-width="1.200"/><rect x="943" y="77" width="3" height="3" fill="#e0e0e0"/><rect x="984.500" y="63.5" width="9" height="6.500" fill="#7a7a7a" stroke="#d0d0d0" stroke-width="1"/><circle cx="994.500" cy="70" r="3" fill="#8a8a8a" stroke="#d0d0d0" stroke-width="1"/><rect x="983" y="69.5" width="2" height="2" fill="#e0e0e0"/><rect x="984.500" y="87.5" width="9" height="6.500" fill="#7a7a7a" stroke="#d0d0d0" stroke-width="1"/><circle cx="994.500" cy="94" r="3" fill="#8a8a8a" stroke="#d0d0d0" stroke-width="1"/><rect x="983" y="93.5" width="2" height="2" fill="#e0e0e0"/><path d="M995 57 v9 M990.500 61.500 h9 M992 58.500 l6 6 M998 58.500 l-6 6" stroke="#f3c574" stroke-width="1.300"/><path d="M991 89.500 l5 -6 l2.500 2 l-5 6z" fill="#f3c574"/><path d="M996 83.500 l1.200 -1.500 l2.500 2 l-1.200 1.500z" fill="#b86a4a"/><path d="M984.500 107 h6 l7 7 l-7 6.500 l-6 -6z" stroke="#e0e0e0" stroke-width="1.500" fill="none"/><path d="M988 112 l2 2 l3 -3" stroke="#e0e0e0" stroke-width="1.300" fill="none"/><path d="M992 112 l5 -6 l2.500 2 l-5 6z" fill="#f3c574"/><path d="M997 106 l1.200 -1.500 l2.500 2 l-1.200 1.500z" fill="#b86a4a"/></svg>
<span class="t" style="left:945.0px;top:91.1px;font-size:12px;color:#f0f0f0;line-height:14.4px;letter-spacing:-0.17px;">Insert</span>
<svg class="b" style="left:955.5px;top:107px" width="8" height="5" viewBox="0 0 8 5"><path d="M1 0.8 L7 0.8 L4 4.2 Z" fill="#f0f0f0"/></svg>
<span class="t" style="left:1004.3px;top:58.1px;font-size:12px;color:#f0f0f0;line-height:14.4px;letter-spacing:-0.34px;">Create</span>
<span class="t" style="left:1004.3px;top:82.1px;font-size:12px;color:#f0f0f0;line-height:14.4px;letter-spacing:-0.17px;">Edit</span>
<span class="t" style="left:1004.3px;top:106.1px;font-size:12px;color:#f0f0f0;line-height:14.4px;letter-spacing:0.06px;">Edit Attributes</span>
<svg class="b" style="left:1085px;top:111px" width="8" height="5" viewBox="0 0 8 5"><path d="M1 0.8 L7 0.8 L4 4.2 Z" fill="#f0f0f0"/></svg>
<svg class="b" style="left:0px;top:0px;" width="1370" height="128" viewBox="0 0 1370 128"><defs><linearGradient id="cg" x1="0" y1="0" x2="0" y2="1"><stop offset="0" stop-color="#626262"/><stop offset="1" stop-color="#505050"/></linearGradient></defs><rect x="1116" y="56" width="20" height="28" fill="#d6d6d6"/><rect x="1118.500" y="58.500" width="12.500" height="10" fill="#62b5ee"/><path d="M1119 75 h8 M1119 79.500 h10 M1122 73 v4 M1126 77.500 v4" stroke="#444" stroke-width="1"/><path d="M1130 79 l5 -5 l8 8 l-5 5z" fill="#f3c574"/><path d="M1135 74 l4 -4 l2 2 l1.500 -1.500 l2 2 l-1.500 1.500 l2 2 l-4 4z" fill="#f2f2f2"/><circle cx="1171" cy="63.500" r="8" fill="#c9a060"/><path d="M1171 63.500 L1171 55.500 A8 8 0 0 0 1163.200 65 z" fill="#2eb36a"/><path d="M1171 63.500 L1163.200 65 A8 8 0 0 0 1168 71 z" fill="#17a7b8"/><path d="M1171 63.500 L1168 71 A8 8 0 0 0 1177 69 z" fill="#7b4fe0"/><path d="M1171 63.500 L1177 69 A8 8 0 0 0 1179 63z" fill="#d8c8a8"/><path d="M1163 80.500 h16" stroke="#d8d8d8" stroke-width="1"/><path d="M1163 84 h16" stroke="#d8d8d8" stroke-width="2"/><path d="M1163 88.500 h16" stroke="#d8d8d8" stroke-width="3"/><path d="M1163 94 h16" stroke="#d8d8d8" stroke-width="4"/><path d="M1163 106 h16" stroke="#d8d8d8" stroke-width="1" stroke-dasharray="1 1"/><path d="M1163 109.500 h16" stroke="#d8d8d8" stroke-width="1" stroke-dasharray="3 1"/><path d="M1163 113 h16" stroke="#d8d8d8" stroke-width="1" stroke-dasharray="5 1 1 1"/><path d="M1163 116.500 h16" stroke="#d8d8d8" stroke-width="1" stroke-dasharray="4 2"/><rect x="1181.500" y="54.5" width="179.500" height="21" fill="url(#cg)" stroke="#2c2c2c"/><path d="M1351 63 h8 l-4 4.500z" fill="#f0f0f0"/><rect x="1181.500" y="77.5" width="179.500" height="21" fill="url(#cg)" stroke="#2c2c2c"/><path d="M1351 86 h8 l-4 4.500z" fill="#f0f0f0"/><rect x="1181.500" y="101.5" width="179.500" height="21" fill="url(#cg)" stroke="#2c2c2c"/><path d="M1351 110 h8 l-4 4.500z" fill="#f0f0f0"/><rect x="1194" y="57.500" width="16" height="15.500" fill="#fafafa"/><path d="M1185 87.500 h64 M1185 112.500 h64" stroke="#e8e8e8" stroke-width="1"/></svg>
<span class="t" style="left:1114.0px;top:91.6px;font-size:12px;color:#f0f0f0;line-height:14.4px;letter-spacing:0.26px;">Match</span>
<span class="t" style="left:1104.5px;top:107.1px;font-size:12px;color:#f0f0f0;line-height:14.4px;letter-spacing:-0.17px;">Properties</span>
<span class="t" style="left:1220.5px;top:58.1px;font-size:12px;color:#f0f0f0;line-height:14.4px;letter-spacing:-0.43px;">ByLayer</span>
<span class="t" style="left:1251.0px;top:81.1px;font-size:12px;color:#f0f0f0;line-height:14.4px;letter-spacing:-0.43px;">ByLayer</span>
<span class="t" style="left:1251.0px;top:105.1px;font-size:12px;color:#f0f0f0;line-height:14.4px;letter-spacing:-0.43px;">ByLayer</span>
<svg class="b" style="left:0px;top:0px;" width="1440" height="128" viewBox="0 0 1440 128"><path d="M1374 59 h-4.500 v27 h4.500 M1385 86 h4.500 v-12" stroke="#e0e0e0" stroke-width="1.500" fill="none"/><path d="M1374 64 h6 l2 2 v5 h-8z" fill="#62b5ee"/><circle cx="1379.500" cy="78.500" r="4.500" fill="#8a8a8a" stroke="#c8c8c8" stroke-width="1.300"/><path d="M1391 57 v14 M1384 64 h14 M1386 59 l10 10 M1396 59 l-10 10" stroke="#f3c574" stroke-width="1.800"/><circle cx="1391" cy="64" r="3.500" fill="#f3c574"/><rect x="1412.500" y="59.500" width="5" height="4" fill="none" stroke="#62b5ee"/><circle cx="1415" cy="68.500" r="2.500" fill="#8a8a8a" stroke="#c8c8c8"/><path d="M1421 58 h3 v14 h-3" stroke="#e0e0e0" stroke-width="1.100" fill="none"/><path d="M1420.500 62 l5 5 M1425.500 62 l-5 5" stroke="#c8643a" stroke-width="1.400"/><path d="M1413 82 h-2 v13 h2 M1418.500 82 h2 v7" stroke="#e0e0e0" stroke-width="1.100" fill="none"/><rect x="1413.500" y="84.500" width="4" height="3" fill="none" stroke="#62b5ee"/><circle cx="1415.500" cy="91.500" r="2" fill="#8a8a8a" stroke="#c8c8c8"/><path d="M1419 95 l4 -4.500 l2.500 2 l-4 4.500z" fill="#f3c574"/><rect x="1406.500" y="102.500" width="22.500" height="21" fill="#4a6fa8" stroke="#2c4470"/><path d="M1414 106 h-2.500 v13 h2.500 M1419 106 h2.500 v4" stroke="#f0f0f0" stroke-width="1.200" fill="none"/><rect x="1414.500" y="107.500" width="4" height="3.500" fill="none" stroke="#5ad05a"/><circle cx="1416.500" cy="115.500" r="2.300" fill="none" stroke="#5ad05a"/><path d="M1420 109 v11 l2.500 -2.500 l2 4 l1.500 -0.800 l-2 -4 h3.500z" fill="#f4f4f4"/></svg>
<span class="t" style="left:1369.0px;top:92.1px;font-size:12px;color:#f0f0f0;line-height:14.4px;letter-spacing:-0.07px;">Group</span>
<svg class="b" style="left:0px;top:0px;" width="1535" height="128" viewBox="0 0 1535 128"><path d="M1455.500 64 v9 M1483 64 v9 M1457 68.500 h24.500" stroke="#e0e0e0" stroke-width="1.100"/><path d="M1456 68.500 l3.500 -2.200 v4.400z M1482.500 68.500 l-3.500 -2.200 v4.400z" fill="#e0e0e0"/><rect x="1455" y="74.500" width="28.500" height="6" fill="#f3c574"/><path d="M1458 74.500 v3 M1461 74.500 v2 M1464 74.500 v3 M1467 74.500 v2 M1470 74.500 v3 M1473 74.500 v2 M1476 74.500 v3 M1479 74.500 v2" stroke="#8a6a2a" stroke-width="0.800"/><path d="M1507 59 v11 l2.500 -2.500 l2 4 l1.500 -0.800 l-2 -4 h3.500z" fill="#f4f4f4"/><rect x="1514.500" y="64.500" width="8.500" height="7" fill="#e8e8e8"/><path d="M1516 66.500 h6 M1516 69 h6" stroke="#555" stroke-width="0.800"/><path d="M1514 57 l-1 4 h2 l-1 3" stroke="#f3c574" stroke-width="1.200" fill="none"/><rect x="1508.500" y="82.500" width="13" height="11" fill="#4a7a4a" stroke="#5ad05a" stroke-dasharray="2 1"/><rect x="1511" y="85" width="8" height="6.500" fill="#9a9a9a"/><path d="M1516 86 v11 l2.500 -2.500 l2 4 l1.500 -0.800 l-2 -4 h3.500z" fill="#f4f4f4"/><rect x="1510.500" y="105.500" width="10" height="14" fill="none" stroke="#d8d8d8" stroke-width="1.200"/><path d="M1512 108.500 h7" stroke="#d8d8d8" stroke-width="1.500"/><path d="M1512.500 112 h6 M1512.500 114.500 h6 M1512.500 117 h6" stroke="#d8d8d8" stroke-width="1.300" stroke-dasharray="1.500 0.800"/></svg>
<span class="t" style="left:1446.2px;top:92.1px;font-size:12px;color:#f0f0f0;line-height:14.4px;letter-spacing:-0.24px;">Measure</span>
<svg class="b" style="left:1464.5px;top:108px" width="8" height="5" viewBox="0 0 8 5"><path d="M1 0.8 L7 0.8 L4 4.2 Z" fill="#f0f0f0"/></svg>
<svg class="b" style="left:0px;top:0px;" width="1615" height="128" viewBox="0 0 1615 128"><rect x="1544" y="60" width="21" height="24" rx="1.500" fill="#e8b877"/><rect x="1550" y="57" width="9" height="5" rx="1" fill="#e8e8e8"/><path d="M1555 66 h10 l5.500 5.500 v16 h-15.500z" fill="#dcdcdc"/><path d="M1565 66 v5.500 h5.500z" fill="#f6f6f6"/><rect x="1587" y="58" width="9" height="11" fill="none" stroke="#d8d8d8" stroke-width="1"/><path d="M1588.500 61 h6 M1588.500 63.500 h6 M1588.500 66 h4" stroke="#d8d8d8" stroke-width="0.900"/><path d="M1594 60 l7 9 M1601 60 l-7 9" stroke="#e0e0e0" stroke-width="1.200"/><circle cx="1594.500" cy="70.500" r="1.700" fill="none" stroke="#e0e0e0"/><circle cx="1600.500" cy="70.500" r="1.700" fill="none" stroke="#e0e0e0"/><path d="M1588 82 h6 l3 3 v8 h-9z" fill="#cfcfcf"/><path d="M1592 86 h6 l3 3 v8 h-9z" fill="#e2e2e2" stroke="#5b5b5b" stroke-width="0.800"/></svg>
<span class="t" style="left:1543.2px;top:92.1px;font-size:12px;color:#f0f0f0;line-height:14.4px;letter-spacing:-0.54px;">Paste</span>
<svg class="b" style="left:1553px;top:108px" width="8" height="5" viewBox="0 0 8 5"><path d="M1 0.8 L7 0.8 L4 4.2 Z" fill="#f0f0f0"/></svg>
<svg class="b" style="left:1620px;top:55px;" width="45" height="35" viewBox="0 0 45 35"><path d="M5 5 h13 v10 h19.500 v14 h-32.500z" fill="#dedede"/></svg>
<span class="t" style="left:1628.7px;top:92.1px;font-size:12px;color:#f0f0f0;line-height:14.4px;letter-spacing:-0.84px;">Base</span>
<svg class="b" style="left:1636.5px;top:108px" width="8" height="5" viewBox="0 0 8 5"><path d="M1 0.8 L7 0.8 L4 4.2 Z" fill="#f0f0f0"/></svg>
<div class="b" style="left:0px;top:151px;width:1901px;height:22px;background:#353535;"></div>
<svg class="b" style="left:0px;top:0px;" width="1900" height="180" viewBox="0 0 1900 180"><defs><linearGradient id="ti" x1="0" y1="0" x2="0" y2="1"><stop offset="0" stop-color="#5e5e5e"/><stop offset="1" stop-color="#525252"/></linearGradient><linearGradient id="ta" x1="0" y1="0" x2="0" y2="1"><stop offset="0" stop-color="#767676"/><stop offset="1" stop-color="#5d5d5d"/></linearGradient></defs><path d="M11 173.5 C21 173.5 19 151 29 151 L137 151 Q143 151 143.5 157 L144.5 168.5 Q145 173.5 149 173.5 Z" fill="url(#ti)" stroke="#434343" stroke-width="1"/><path d="M134 173.5 C144 173.5 142 151 152 151 L281 151 Q287 151 287.5 157 L288.5 168.5 Q289 173.5 293 173.5 Z" fill="url(#ti)" stroke="#434343" stroke-width="1"/><path d="M268.8 158.8 l6.400 6.400 M275.2 158.8 l-6.400 6.400" stroke="#333" stroke-width="1.900"/><path d="M278 173.5 C288 173.5 286 151 296 151 L404 151 Q410 151 410.5 157 L411.5 168.5 Q412 173.5 416 173.5 Z" fill="url(#ti)" stroke="#434343" stroke-width="1"/><path d="M391.8 158.8 l6.400 6.400 M398.2 158.8 l-6.400 6.400" stroke="#333" stroke-width="1.900"/><path d="M401 173.5 C411 173.5 409 151 419 151 L527 151 Q533 151 533.5 157 L534.5 168.5 Q535 173.5 539 173.5 Z" fill="url(#ti)" stroke="#434343" stroke-width="1"/><path d="M514.8 158.8 l6.400 6.400 M521.2 158.8 l-6.400 6.400" stroke="#333" stroke-width="1.900"/><path d="M524 173.5 C534 173.5 532 151 542 151 L650 151 Q656 151 656.5 157 L657.5 168.5 Q658 173.5 662 173.5 Z" fill="url(#ti)" stroke="#434343" stroke-width="1"/><path d="M637.8 158.8 l6.400 6.400 M644.2 158.8 l-6.400 6.400" stroke="#333" stroke-width="1.900"/><path d="M647 173.5 C657 173.5 655 151 665 151 L773 151 Q779 151 779.5 157 L780.5 168.5 Q781 173.5 785 173.5 Z" fill="url(#ti)" stroke="#434343" stroke-width="1"/><path d="M760.8 158.8 l6.400 6.400 M767.2 158.8 l-6.400 6.400" stroke="#333" stroke-width="1.900"/><path d="M770 173.5 C780 173.5 778 151 788 151 L896 151 Q902 151 902.5 157 L903.5 168.5 Q904 173.5 908 173.5 Z" fill="url(#ti)" stroke="#434343" stroke-width="1"/><path d="M883.8 158.8 l6.400 6.400 M890.2 158.8 l-6.400 6.400" stroke="#333" stroke-width="1.900"/><path d="M893 173.5 C903 173.5 901 151 911 151 L1019 151 Q1025 151 1025.5 157 L1026.5 168.5 Q1027 173.5 1031 173.5 Z" fill="url(#ti)" stroke="#434343" stroke-width="1"/><path d="M1006.8 158.8 l6.400 6.400 M1013.2 158.8 l-6.400 6.400" stroke="#333" stroke-width="1.900"/><path d="M1016 173.5 C1026 173.5 1024 151 1034 151 L1142 151 Q1148 151 1148.5 157 L1149.5 168.5 Q1150 173.5 1154 173.5 Z" fill="url(#ti)" stroke="#434343" stroke-width="1"/><path d="M1129.8 158.8 l6.400 6.400 M1136.2 158.8 l-6.400 6.400" stroke="#333" stroke-width="1.900"/><path d="M1139 173.5 C1149 173.5 1147 151 1157 151 L1265 151 Q1271 151 1271.5 157 L1272.5 168.5 Q1273 173.5 1277 173.5 Z" fill="url(#ti)" stroke="#434343" stroke-width="1"/><path d="M1252.8 158.8 l6.400 6.400 M1259.2 158.8 l-6.400 6.400" stroke="#333" stroke-width="1.900"/><path d="M1262 173.5 C1272 173.5 1270 151 1280 151 L1388 151 Q1394 151 1394.5 157 L1395.5 168.5 Q1396 173.5 1400 173.5 Z" fill="url(#ti)" stroke="#434343" stroke-width="1"/><path d="M1375.8 158.8 l6.400 6.400 M1382.2 158.8 l-6.400 6.400" stroke="#333" stroke-width="1.900"/><path d="M1385 173.5 C1395 173.5 1393 151 1403 151 L1511 151 Q1517 151 1517.5 157 L1518.5 168.5 Q1519 173.5 1523 173.5 Z" fill="url(#ti)" stroke="#434343" stroke-width="1"/><path d="M1498.8 158.8 l6.400 6.400 M1505.2 158.8 l-6.400 6.400" stroke="#333" stroke-width="1.900"/><path d="M1508 173.5 C1518 173.5 1516 151 1526 151 L1634 151 Q1640 151 1640.5 157 L1641.5 168.5 Q1642 173.5 1646 173.5 Z" fill="url(#ti)" stroke="#434343" stroke-width="1"/><path d="M1621.8 158.8 l6.400 6.400 M1628.2 158.8 l-6.400 6.400" stroke="#333" stroke-width="1.900"/><path d="M1631 173.5 C1641 173.5 1639 151 1649 151 L1757 151 Q1763 151 1763.5 157 L1764.5 168.5 Q1765 173.5 1769 173.5 Z" fill="url(#ta)" stroke="#434343" stroke-width="1"/><path d="M1744.8 158.8 l6.400 6.400 M1751.2 158.8 l-6.400 6.400" stroke="#3a3a3a" stroke-width="1.900"/><path d="M1771 155.500 h12 q8 1 11 14.500 h-14 q-7 -1 -9 -14.500z" fill="#555"/><path d="M1778.500 163 h9 M1783 158.500 v9" stroke="#e0e0e0" stroke-width="1.800"/></svg>
<div class="b" style="left:0px;top:173px;width:1901px;height:4px;background:#5d5d5d;"></div>
<span class="t" style="left:32.0px;top:155.6px;font-size:12px;color:#d4d4d4;line-height:14.4px;letter-spacing:-0.37px;">Start</span>
<span class="t" style="left:155.0px;top:155.6px;font-size:12px;color:#d4d4d4;line-height:14.4px;letter-spacing:-0.63px;">DETAIL BAK BUNGA</span>
<span class="t" style="left:299.0px;top:155.6px;font-size:12px;color:#d4d4d4;line-height:14.4px;letter-spacing:-0.50px;">2C125*</span>
<span class="t" style="left:422.0px;top:155.6px;font-size:12px;color:#d4d4d4;line-height:14.4px;letter-spacing:-0.57px;">2WF150*</span>
<span class="t" style="left:545.0px;top:155.6px;font-size:12px;color:#d4d4d4;line-height:14.4px;letter-spacing:-0.57px;">2WF200*</span>
<span class="t" style="left:668.0px;top:155.6px;font-size:12px;color:#d4d4d4;line-height:14.4px;letter-spacing:-0.57px;">2WF248*</span>
<span class="t" style="left:791.0px;top:155.6px;font-size:12px;color:#d4d4d4;line-height:14.4px;letter-spacing:-0.64px;">2WF250</span>
<span class="t" style="left:914.0px;top:155.6px;font-size:12px;color:#d4d4d4;line-height:14.4px;letter-spacing:-0.64px;">2WF298</span>
<span class="t" style="left:1037.0px;top:155.6px;font-size:12px;color:#d4d4d4;line-height:14.4px;letter-spacing:-0.57px;">2WF396*</span>
<span class="t" style="left:1160.0px;top:155.6px;font-size:12px;color:#d4d4d4;line-height:14.4px;letter-spacing:-0.64px;">2WF400</span>
<span class="t" style="left:1283.0px;top:155.6px;font-size:12px;color:#d4d4d4;line-height:14.4px;letter-spacing:-0.64px;">2WF500</span>
<span class="t" style="left:1406.0px;top:155.6px;font-size:12px;color:#d4d4d4;line-height:14.4px;letter-spacing:-0.74px;">C150P</span>
<span class="t" style="left:1529.0px;top:155.6px;font-size:12px;color:#d4d4d4;line-height:14.4px;letter-spacing:-0.87px;">C150SP</span>
<span class="t" style="left:1652.0px;top:155.6px;font-size:12px;color:#e9e9e9;line-height:14.4px;letter-spacing:-0.70px;">JS-W10</span>
<div class="b" style="left:0px;top:177px;width:1901px;height:812px;background:#212830;"></div>
<svg class="b" style="left:0;top:177px" width="1900" height="811" viewBox="0 177 1900 811"><path d="M60.5 453.5 L1171.5 453.5" stroke="#e2e2e2" stroke-width="1.3"/><path d="M60.5 473 L1171.5 473" stroke="#e2e2e2" stroke-width="1.3"/><path d="M60.5 714.9 L1171.5 714.9" stroke="#e2e2e2" stroke-width="1.3"/><path d="M60.5 734.5 L1171.5 734.5" stroke="#e2e2e2" stroke-width="1.3"/><path d="M61 453 L61 735" stroke="#e2e2e2" stroke-width="1.5"/><path d="M1171.5 426 L1171.5 550" stroke="#10d4dc" stroke-width="1.3"/><path d="M1171.5 634.5 L1171.5 758.5" stroke="#10d4dc" stroke-width="1.3"/><rect x="1170.500" y="591" width="1.500" height="1.500" fill="#10d4dc"/><path d="M32 488.5 L202 488.5" stroke="#10d4dc" stroke-width="1.2"/><path d="M32 699.5 L202 699.5" stroke="#10d4dc" stroke-width="1.2"/><path d="M201.5 488.5 L201.5 699.5" stroke="#10d4dc" stroke-width="1.2"/><path d="M61 489 L61 699" stroke="#0c0cb4" stroke-width="2"/><path d="M130.5 306 L750 306" stroke="#ea0c0c" stroke-width="1.2"/><path d="M130.5 306 L130.5 540" stroke="#ea0c0c" stroke-width="1.2"/><path d="M131.5 699.5 L131.5 911" stroke="#ea0c0c" stroke-width="1.2"/><circle cx="131.5" cy="544.5" r="34" fill="none" stroke="#ea0c0c" stroke-width="1.100"/><circle cx="131.5" cy="544.5" r="17" fill="none" stroke="#ea0c0c" stroke-width="1.100"/><path d="M165.5 544.5 L148.5 573.9 L114.5 573.9 L97.5 544.5 L114.5 515.1 L148.5 515.1 Z" fill="none" stroke="#ea0c0c" stroke-width="1.100"/><path d="M104 544.5 L159 544.5" stroke="#ea0c0c" stroke-width="1.1"/><path d="M131.5 517 L131.5 572" stroke="#ea0c0c" stroke-width="1.1"/><circle cx="131.5" cy="643" r="34" fill="none" stroke="#ea0c0c" stroke-width="1.100"/><circle cx="131.5" cy="643" r="17" fill="none" stroke="#ea0c0c" stroke-width="1.100"/><path d="M165.5 643.0 L148.5 672.4 L114.5 672.4 L97.5 643.0 L114.5 613.6 L148.5 613.6 Z" fill="none" stroke="#ea0c0c" stroke-width="1.100"/><path d="M104 643 L159 643" stroke="#ea0c0c" stroke-width="1.1"/><path d="M131.5 615.5 L131.5 670.5" stroke="#ea0c0c" stroke-width="1.1"/><circle cx="130.500" cy="540" r="14.500" fill="#ff0000"/><path d="M187 544.5 L375 544.5" stroke="#ea0c0c" stroke-width="1.2"/><path d="M187 643 L375 643" stroke="#ea0c0c" stroke-width="1.2"/><path d="M258 488.5 L375 488.5" stroke="#ea0c0c" stroke-width="1.2"/><path d="M258 699.5 L375 699.5" stroke="#ea0c0c" stroke-width="1.2"/><path d="M332.5 488.5 L332.5 699.5" stroke="#ea0c0c" stroke-width="1.2"/><circle cx="332.500" cy="488.5" r="14.300" fill="#ff0000"/><circle cx="332.500" cy="544.5" r="14.300" fill="#ff0000"/><circle cx="332.500" cy="643" r="14.300" fill="#ff0000"/><circle cx="332.500" cy="699.5" r="14.300" fill="#ff0000"/><rect x="332" y="544" width="1" height="1" fill="#fff"/><rect x="332" y="642.5" width="1" height="1" fill="#fff"/><path d="M61 771 L61 953" stroke="#ea0c0c" stroke-width="1.2"/><path d="M201.5 771 L201.5 953" stroke="#ea0c0c" stroke-width="1.2"/><path d="M131.5 911 L131.5 953" stroke="#ea0c0c" stroke-width="1.2"/><path d="M61 910.5 L201.5 910.5" stroke="#ea0c0c" stroke-width="1.2"/><circle cx="61" cy="910.500" r="14.300" fill="#ff0000"/><circle cx="131.5" cy="910.500" r="14.300" fill="#ff0000"/><circle cx="201.5" cy="910.500" r="14.300" fill="#ff0000"/><rect x="131" y="910" width="1" height="1" fill="#fff"/><path d="M243.1 211.5 L243.1 268.4 M243.1 211.5 L267.2 211.5 L275.3 214.2 L278.0 216.9 L280.6 222.3 L280.6 227.7 L278.0 233.2 L275.3 235.9 L267.2 238.6 M243.1 238.6 L267.2 238.6 L275.3 241.3 L278.0 244.0 L280.6 249.4 L280.6 257.6 L278.0 263.0 L275.3 265.7 L267.2 268.4 L243.1 268.4 M312.8 211.5 L307.4 214.2 L302.1 219.6 L299.4 225.0 L296.7 233.2 L296.7 246.7 L299.4 254.8 L302.1 260.3 L307.4 265.7 L312.8 268.4 L323.5 268.4 L328.9 265.7 L334.2 260.3 L336.9 254.8 L339.6 246.7 L339.6 233.2 L336.9 225.0 L334.2 219.6 L328.9 214.2 L323.5 211.5 L312.8 211.5 M358.4 211.5 L358.4 268.4 M358.4 268.4 L390.5 268.4 M414.6 211.5 L414.6 268.4 M395.9 211.5 L433.4 211.5" fill="none" stroke="#d2d2d2" stroke-width="1.15" stroke-linejoin="round" stroke-linecap="round"/><path d="M502.3 225.0 L502.3 222.3 L505.0 216.9 L507.7 214.2 L513.0 211.5 L523.8 211.5 L529.1 214.2 L531.8 216.9 L534.5 222.3 L534.5 227.7 L531.8 233.2 L526.4 241.3 L499.6 268.4 L537.2 268.4 M555.9 211.5 L555.9 268.4 M555.9 211.5 L577.4 268.4 M598.8 211.5 L577.4 268.4 M598.8 211.5 L598.8 268.4 M625.6 222.3 L631.0 219.6 L639.0 211.5 L639.0 268.4 M673.8 225.0 L673.8 222.3 L676.5 216.9 L679.2 214.2 L684.6 211.5 L695.3 211.5 L700.6 214.2 L703.3 216.9 L706.0 222.3 L706.0 227.7 L703.3 233.2 L698.0 241.3 L671.2 268.4 L708.7 268.4" fill="none" stroke="#d2d2d2" stroke-width="1.15" stroke-linejoin="round" stroke-linecap="round"/><path d="M243.1 329.9 L243.1 386.8 M243.1 329.9 L267.2 329.9 L275.3 332.6 L278.0 335.3 L280.6 340.7 L280.6 348.9 L278.0 354.3 L275.3 357.0 L267.2 359.7 L243.1 359.7 M299.4 329.9 L299.4 386.8 M299.4 386.8 L331.6 386.8 M345.0 362.4 L393.2 362.4 M446.8 338.0 L444.1 332.6 L436.1 329.9 L430.7 329.9 L422.7 332.6 L417.3 340.7 L414.6 354.3 L414.6 367.8 L417.3 378.7 L422.7 384.1 L430.7 386.8 L433.4 386.8 L441.4 384.1 L446.8 378.7 L449.5 370.5 L449.5 367.8 L446.8 359.7 L441.4 354.3 L433.4 351.6 L430.7 351.6 L422.7 354.3 L417.3 359.7 L414.6 367.8 M468.2 348.9 L468.2 386.8 M468.2 359.7 L476.3 351.6 L481.6 348.9 L489.7 348.9 L495.0 351.6 L497.7 359.7 L497.7 386.8 M497.7 359.7 L505.8 351.6 L511.1 348.9 L519.2 348.9 L524.5 351.6 L527.2 359.7 L527.2 386.8 M548.6 348.9 L548.6 386.8 M548.6 359.7 L556.7 351.6 L562.0 348.9 L570.1 348.9 L575.4 351.6 L578.1 359.7 L578.1 386.8 M578.1 359.7 L586.2 351.6 L591.5 348.9 L599.6 348.9 L604.9 351.6 L607.6 359.7 L607.6 386.8" fill="none" stroke="#d2d2d2" stroke-width="1.15" stroke-linejoin="round" stroke-linecap="round"/><path d="M457.5 561.1 L470.9 618.0 M484.3 561.1 L470.9 618.0 M484.3 561.1 L497.7 618.0 M511.1 561.1 L497.7 618.0 M527.1 561.1 L527.1 618.0 M527.1 561.1 L562.0 561.1 M527.1 588.2 L548.6 588.2 M578.1 612.6 L575.4 615.3 L578.1 618.0 L580.7 615.3 L578.1 612.6 M607.5 571.9 L612.9 569.2 L620.9 561.1 L620.9 618.0 M669.2 561.1 L661.1 563.8 L655.8 571.9 L653.1 585.5 L653.1 593.6 L655.8 607.2 L661.1 615.3 L669.2 618.0 L674.5 618.0 L682.6 615.3 L687.9 607.2 L690.6 593.6 L690.6 585.5 L687.9 571.9 L682.6 563.8 L674.5 561.1 L669.2 561.1 M722.8 561.1 L714.7 563.8 L709.4 571.9 L706.7 585.5 L706.7 593.6 L709.4 607.2 L714.7 615.3 L722.8 618.0 L728.1 618.0 L736.2 615.3 L741.5 607.2 L744.2 593.6 L744.2 585.5 L741.5 571.9 L736.2 563.8 L728.1 561.1 L722.8 561.1 M765.7 612.6 L763.0 615.3 L765.7 618.0 L768.3 615.3 L765.7 612.6 M819.3 561.1 L792.5 561.1 L789.8 585.5 L792.5 582.8 L800.5 580.1 L808.5 580.1 L816.6 582.8 L821.9 588.2 L824.6 596.3 L824.6 601.7 L821.9 609.9 L816.6 615.3 L808.5 618.0 L800.5 618.0 L792.5 615.3 L789.8 612.6 L787.1 607.2 M856.8 561.1 L848.7 563.8 L843.4 571.9 L840.7 585.5 L840.7 593.6 L843.4 607.2 L848.7 615.3 L856.8 618.0 L862.1 618.0 L870.2 615.3 L875.5 607.2 L878.2 593.6 L878.2 585.5 L875.5 571.9 L870.2 563.8 L862.1 561.1 L856.8 561.1 M899.7 612.6 L897.0 615.3 L899.7 618.0 L902.3 615.3 L899.7 612.6 M953.3 561.1 L926.5 561.1 L923.8 585.5 L926.5 582.8 L934.5 580.1 L942.5 580.1 L950.6 582.8 L955.9 588.2 L958.6 596.3 L958.6 601.7 L955.9 609.9 L950.6 615.3 L942.5 618.0 L934.5 618.0 L926.5 615.3 L923.8 612.6 L921.1 607.2 M980.1 612.6 L977.4 615.3 L980.1 618.0 L982.7 615.3 L980.1 612.6 M1039.0 561.1 L1012.2 618.0 M1001.5 561.1 L1039.0 561.1" fill="none" stroke="#d2d2d2" stroke-width="1.15" stroke-linejoin="round" stroke-linecap="round"/><path d="M21.9 840.0 L21.9 837.3 L24.6 831.9 L27.3 829.2 L32.6 826.5 L43.4 826.5 L48.7 829.2 L51.4 831.9 L54.1 837.3 L54.1 842.8 L51.4 848.2 L46.0 856.3 L19.2 883.4 L56.8 883.4 M105.0 826.5 L78.2 826.5 L75.5 850.9 L78.2 848.2 L86.2 845.5 L94.3 845.5 L102.3 848.2 L107.7 853.6 L110.4 861.7 L110.4 867.1 L107.7 875.3 L102.3 880.7 L94.3 883.4 L86.2 883.4 L78.2 880.7 L75.5 878.0 L72.8 872.6" fill="none" stroke="#d2d2d2" stroke-width="1.15" stroke-linejoin="round" stroke-linecap="round"/><path d="M161.7 840.0 L161.7 837.3 L164.4 831.9 L167.1 829.2 L172.4 826.5 L183.2 826.5 L188.5 829.2 L191.2 831.9 L193.9 837.3 L193.9 842.8 L191.2 848.2 L185.8 856.3 L159.0 883.4 L196.6 883.4 M244.8 826.5 L218.0 826.5 L215.3 850.9 L218.0 848.2 L226.0 845.5 L234.1 845.5 L242.1 848.2 L247.5 853.6 L250.2 861.7 L250.2 867.1 L247.5 875.3 L242.1 880.7 L234.1 883.4 L226.0 883.4 L218.0 880.7 L215.3 878.0 L212.6 872.6" fill="none" stroke="#d2d2d2" stroke-width="1.15" stroke-linejoin="round" stroke-linecap="round"/><path d="M261.5 754.2 L258.8 754.2 L253.4 751.5 L250.7 748.8 L248.0 743.5 L248.0 732.9 L250.7 727.6 L253.4 724.9 L258.8 722.2 L264.2 722.2 L269.6 724.9 L277.7 730.2 L304.7 756.8 L304.7 719.6 M248.0 687.7 L250.7 695.6 L258.8 701.0 L272.3 703.6 L280.4 703.6 L293.9 701.0 L302.0 695.6 L304.7 687.7 L304.7 682.3 L302.0 674.4 L293.9 669.0 L280.4 666.4 L272.3 666.4 L258.8 669.0 L250.7 674.4 L248.0 682.3 L248.0 687.7" fill="none" stroke="#d2d2d2" stroke-width="1.15" stroke-linejoin="round" stroke-linecap="round"/><path d="M248.0 633.7 L248.0 604.4 L269.6 620.4 L269.6 612.4 L272.3 607.1 L275.0 604.4 L283.1 601.8 L288.5 601.8 L296.6 604.4 L302.0 609.8 L304.7 617.7 L304.7 625.7 L302.0 633.7 L299.3 636.4 L293.9 639.0 M248.0 553.9 L248.0 580.5 L272.3 583.2 L269.6 580.5 L266.9 572.5 L266.9 564.5 L269.6 556.6 L275.0 551.2 L283.1 548.6 L288.5 548.6 L296.6 551.2 L302.0 556.6 L304.7 564.5 L304.7 572.5 L302.0 580.5 L299.3 583.2 L293.9 585.8" fill="none" stroke="#d2d2d2" stroke-width="1.15" stroke-linejoin="round" stroke-linecap="round"/><path d="M261.5 518.2 L258.8 518.2 L253.4 515.5 L250.7 512.8 L248.0 507.5 L248.0 496.9 L250.7 491.6 L253.4 488.9 L258.8 486.2 L264.2 486.2 L269.6 488.9 L277.7 494.2 L304.7 520.8 L304.7 483.6 M248.0 451.7 L250.7 459.6 L258.8 465.0 L272.3 467.6 L280.4 467.6 L293.9 465.0 L302.0 459.6 L304.7 451.7 L304.7 446.3 L302.0 438.4 L293.9 433.0 L280.4 430.4 L272.3 430.4 L258.8 433.0 L250.7 438.4 L248.0 446.3 L248.0 451.7" fill="none" stroke="#d2d2d2" stroke-width="1.15" stroke-linejoin="round" stroke-linecap="round"/><path d="M1332.5 453.5 H1473.5 V473 H1416 Q1410 473 1410 479 V708.9 Q1410 714.9 1416 714.9 H1473.5 V734.5 H1332.5 V714.9 H1390 Q1396 714.9 1396 708.9 V479 Q1396 473 1390 473 H1332.5 Z" fill="none" stroke="#10d4dc" stroke-width="1.300"/><path d="M1396 488.500 H1379.500 V699.500 H1396" fill="none" stroke="#3fcf4f" stroke-width="1.200"/><path d="M1290 544.5 L1408 544.5" stroke="#ea0c0c" stroke-width="1.1"/><path d="M1444.500 527.3 H1308.500 Q1300 544.5 1308.500 561.7 H1444.500" fill="none" stroke="#ea0c0c" stroke-width="1.200"/><rect x="1338.5" y="515.2" width="34" height="58.6" fill="none" stroke="#ea0c0c" stroke-width="1.200"/><path d="M1341.5 515.2 Q1337.5 521.25 1341.5 527.3 M1369.5 515.2 Q1373.5 521.25 1369.5 527.3" fill="none" stroke="#ea0c0c" stroke-width="1"/><path d="M1341.5 573.8 Q1337.5 567.75 1341.5 561.7 M1369.5 573.8 Q1373.5 567.75 1369.5 561.7" fill="none" stroke="#ea0c0c" stroke-width="1"/><path d="M1341.5 527.3 Q1337 544.5 1341.5 561.7 M1369.5 527.3 Q1374 544.5 1369.5 561.7" fill="none" stroke="#ea0c0c" stroke-width="1"/><rect x="1410" y="515.2" width="34.5" height="58.6" fill="none" stroke="#ea0c0c" stroke-width="1.200"/><path d="M1413 515.2 Q1409 521.25 1413 527.3 M1441.5 515.2 Q1445.5 521.25 1441.5 527.3" fill="none" stroke="#ea0c0c" stroke-width="1"/><path d="M1413 573.8 Q1409 567.75 1413 561.7 M1441.5 573.8 Q1445.5 567.75 1441.5 561.7" fill="none" stroke="#ea0c0c" stroke-width="1"/><path d="M1413 527.3 Q1408.5 544.5 1413 561.7 M1441.5 527.3 Q1446 544.5 1441.5 561.7" fill="none" stroke="#ea0c0c" stroke-width="1"/><rect x="1372.500" y="508.2" width="7" height="72.600" fill="none" stroke="#ea0c0c" stroke-width="1.200"/><path d="M1290 643.2 L1408 643.2" stroke="#ea0c0c" stroke-width="1.1"/><path d="M1444.500 626 H1308.500 Q1300 643.2 1308.500 660.4 H1444.500" fill="none" stroke="#ea0c0c" stroke-width="1.200"/><rect x="1338.5" y="613.9" width="34" height="58.6" fill="none" stroke="#ea0c0c" stroke-width="1.200"/><path d="M1341.5 613.9 Q1337.5 619.95 1341.5 626 M1369.5 613.9 Q1373.5 619.95 1369.5 626" fill="none" stroke="#ea0c0c" stroke-width="1"/><path d="M1341.5 672.5 Q1337.5 666.45 1341.5 660.4 M1369.5 672.5 Q1373.5 666.45 1369.5 660.4" fill="none" stroke="#ea0c0c" stroke-width="1"/><path d="M1341.5 626 Q1337 643.2 1341.5 660.4 M1369.5 626 Q1374 643.2 1369.5 660.4" fill="none" stroke="#ea0c0c" stroke-width="1"/><rect x="1410" y="613.9" width="34.5" height="58.6" fill="none" stroke="#ea0c0c" stroke-width="1.200"/><path d="M1413 613.9 Q1409 619.95 1413 626 M1441.5 613.9 Q1445.5 619.95 1441.5 626" fill="none" stroke="#ea0c0c" stroke-width="1"/><path d="M1413 672.5 Q1409 666.45 1413 660.4 M1441.5 672.5 Q1445.5 666.45 1441.5 660.4" fill="none" stroke="#ea0c0c" stroke-width="1"/><path d="M1413 626 Q1408.5 643.2 1413 660.4 M1441.5 626 Q1446 643.2 1441.5 660.4" fill="none" stroke="#ea0c0c" stroke-width="1"/><rect x="1372.500" y="606.9" width="7" height="72.600" fill="none" stroke="#ea0c0c" stroke-width="1.200"/><path d="M20.500 918 V968.500 H71" fill="none" stroke="#e0e0e0" stroke-width="1.200"/><rect x="16.500" y="963.500" width="9" height="9.500" fill="none" stroke="#e0e0e0" stroke-width="1.200"/><path d="M22 901.500 l6.500 6.500 l6.500 -6.500 M28.500 908 v6.500" fill="none" stroke="#e0e0e0" stroke-width="1.200"/><path d="M75.500 954 l12.500 13 M88 954 l-12.500 13" fill="none" stroke="#e0e0e0" stroke-width="1.200"/><circle cx="1817" cy="283" r="53.500" fill="none" stroke="#3f454d" stroke-width="13"/><rect x="1791" y="257.500" width="52" height="51" fill="#aaabae"/><rect x="1801" y="267" width="32" height="32" fill="#9b9c9f"/><rect x="1793.500" y="371" width="47" height="17" rx="3.500" fill="#a2a2a4" stroke="#6a6d72" stroke-width="1"/><path d="M1827.500 376.500 h8 l-4 5z" fill="none" stroke="#e0e0e0" stroke-width="1"/><rect x="1864" y="413" width="32" height="212" rx="3" fill="#5a5f67" stroke="#3a3f46" stroke-width="1"/><circle cx="1880" cy="443.500" r="10.500" fill="none" stroke="#474c54" stroke-width="1.300"/><circle cx="1880" cy="443.500" r="6" fill="none" stroke="#474c54" stroke-width="1.300"/><path d="M1877.500 461.500 h5 l-2.500 3z M1877.500 531.500 h5 l-2.500 3z M1877.500 569.500 h5 l-2.500 3z" fill="#474c54"/><path d="M1866 469.500 h28 M1866 576.500 h28" stroke="#6a6f77" stroke-width="1"/><path d="M1874 489 l-3 -3.500 q-1.500 -1 -2 0.500 l4.500 8 q2 3 6 3 q6 0 7 -5 l1.200 -8 q0 -1.800 -1.800 -0.800 l-0.800 4 l0.300 -7 q-0.800 -1.800 -2 0 l-0.400 6 l-0.300 -8 q-1 -1.800 -2.200 0 l0 8 l-1.200 -7 q-1.200 -1.500 -2.200 0.300 l1.200 10z" fill="none" stroke="#474c54" stroke-width="1.100" stroke-linejoin="round"/><path d="M1869 503 l13 13 M1883 503 l-14 14 M1869 503 h4 M1869 503 v4 M1883 503 h-4 M1883 503 v4 M1869 517 h4 M1869 517 v-4" stroke="#474c54" stroke-width="1.300" fill="none"/><circle cx="1884" cy="517.500" r="4" fill="none" stroke="#474c54" stroke-width="1.300"/><path d="M1887 520.500 l4 4" stroke="#474c54" stroke-width="2"/><ellipse cx="1880" cy="553" rx="11" ry="4" fill="none" stroke="#474c54" stroke-width="1.100"/><path d="M1878 562 v-15 h-2.500 l4.500 -6 l4.500 6 h-2.500 v15z" fill="#5a5f67" stroke="#474c54" stroke-width="1.100"/><path d="M1872 557 l4 -3 v6z" fill="#474c54"/><rect x="1869" y="582.500" width="6" height="6" fill="none" stroke="#474c54"/><rect x="1877" y="582.500" width="6" height="6" fill="none" stroke="#474c54"/><rect x="1885" y="582.500" width="6" height="6" fill="none" stroke="#474c54"/><rect x="1869" y="592.500" width="15" height="12" fill="none" stroke="#474c54"/><path d="M1873.500 595 v7 l6.500 -3.500z" fill="#474c54"/><circle cx="1889.500" cy="418" r="3" fill="#474c54"/><circle cx="1889.500" cy="618.500" r="3" fill="#474c54"/><path d="M1839 194 h10" stroke="#f0f0f0" stroke-width="2.400"/><rect x="1860.500" y="190" width="6.500" height="6.500" fill="none" stroke="#f0f0f0" stroke-width="1.800"/><path d="M1862.500 189.500 v-2.500 h6.500 v6.500 h-2" fill="none" stroke="#f0f0f0" stroke-width="1.500"/><path d="M1879 188 l8 8 M1887 188 l-8 8" stroke="#f0f0f0" stroke-width="2.300"/></svg>
<span class="t" style="left:3.5px;top:183.6px;font-size:12px;color:#e4e4e4;line-height:14.4px;letter-spacing:0.17px;">[−][Top][2D Wireframe]</span>
<span class="t" style="left:1810.1px;top:216.4px;font-size:19px;color:#bdbdbf;line-height:22.8px;font-weight:bold;">N</span>
<span class="t" style="left:1810.7px;top:328.9px;font-size:19px;color:#bdbdbf;line-height:22.8px;font-weight:bold;">S</span>
<span class="t" style="left:1752.0px;top:272.4px;font-size:19px;color:#bdbdbf;line-height:22.8px;font-weight:bold;">W</span>
<span class="t" style="left:1867.2px;top:272.4px;font-size:19px;color:#bdbdbf;line-height:22.8px;font-weight:bold;">E</span>
<span class="t" style="left:1806.0px;top:276.6px;font-size:12px;color:#4f5358;line-height:14.4px;letter-spacing:-0.82px;font-weight:bold;">TOP</span>
<span class="t" style="left:1798.5px;top:372.5px;font-size:10.5px;color:#55585e;line-height:12.6px;letter-spacing:-0.83px;">WCS</span>
<div class="b" style="left:494px;top:904px;width:788px;height:15px;background:#4a4d53;border-radius:2px;"></div>
<div class="b" style="left:494px;top:924px;width:60px;height:15px;background:#4a4d53;border-radius:2px;"></div>
<div class="b" style="left:494px;top:944px;width:60px;height:15px;background:#4a4d53;border-radius:2px;"></div>
<span class="t" style="left:496.3px;top:904.9px;font-size:11.5px;color:#cdcdcd;line-height:13.8px;letter-spacing:0.09px;font-family:'Liberation Mono',monospace;">Autodesk DWG.  This file is a TrustedDWG last saved by an Autodesk application or Autodesk licensed application.</span>
<span class="t" style="left:496.3px;top:924.9px;font-size:11.5px;color:#f0f0f0;line-height:13.8px;letter-spacing:0.10px;font-family:'Liberation Mono',monospace;">Command:</span>
<span class="t" style="left:496.3px;top:944.9px;font-size:11.5px;color:#f0f0f0;line-height:13.8px;letter-spacing:0.10px;font-family:'Liberation Mono',monospace;">Command:</span>
<div class="b" style="left:434px;top:962px;width:1033px;height:27px;background:linear-gradient(#4e5054,#2f3134);border-radius:3px 3px 0 0;border:1px solid #3a3d42;border-bottom:none;box-sizing:border-box;"></div>
<div class="b" style="left:488px;top:962px;width:979px;height:26px;background:#bfbfc1;border-radius:0 3px 0 0;"></div>
<svg class="b" style="left:434px;top:962px;" width="90" height="27" viewBox="0 0 90 27"><path d="M3.500 5 v17 M6.500 5 v17" stroke="#9a9da2" stroke-width="1.400" stroke-dasharray="1.200 1.200"/><path d="M16 9.500 l7 7 M23 9.500 l-7 7" stroke="#ececec" stroke-width="2"/><path d="M39.500 6.200 A4.200 4.200 0 1 0 44.800 11.500 L42 12 L39.200 9.200 Z" fill="#ececec"/><path d="M42.500 12 L48.500 18" stroke="#ececec" stroke-width="3" stroke-linecap="round"/><rect x="59.500" y="6.500" width="13.500" height="13" rx="1.500" fill="#d4d4d4" stroke="#555" stroke-width="1"/><path d="M62 10 l3.500 3 l-3.500 3 M66.500 16.500 h4.500" stroke="#3a3a3a" stroke-width="1.300" fill="none"/><path d="M77.500 11.500 h5 l-2.500 3z" fill="#555"/></svg>
<span class="t" style="left:525.2px;top:968.4px;font-size:11.5px;color:#747476;line-height:13.8px;letter-spacing:-0.01px;font-family:'Liberation Mono',monospace;font-style:italic;">Type a command</span>
<svg class="b" style="left:1452px;top:970px;" width="12" height="10" viewBox="0 0 12 10"><path d="M2 7 h7 l-3.500 -4z" fill="#2a2a2a"/></svg>
<div class="b" style="left:0px;top:989px;width:1901px;height:30px;background:#393939;"></div>
<svg class="b" style="left:0px;top:988px;" width="200" height="29" viewBox="0 0 200 29"><defs><linearGradient id="mt" x1="0" y1="0" x2="0" y2="1"><stop offset="0" stop-color="#4c4c4c"/><stop offset="1" stop-color="#909090"/></linearGradient><linearGradient id="lt" x1="0" y1="0" x2="0" y2="1"><stop offset="0" stop-color="#484848"/><stop offset="1" stop-color="#5e5e5e"/></linearGradient></defs><g transform="translate(0 -988)"><path d="M9 989 C14.500 989 13 1006.500 19 1006.500 H61.500 C67 1006.500 65.500 989 71 989 Z" fill="url(#mt)"/><path d="M70 989.500 C74.500 989.500 73 1006 79 1006 H126 C132 1006 130.500 989.500 135.500 989.500 Z" fill="url(#lt)"/><path d="M147 990 H162 C157 990 158 1005 151 1005 H138.500 C145 1005 144 990 147 990Z" fill="#4d4d4d"/><path d="M146 997.500 h8 M150 993.500 v8" stroke="#e0e0e0" stroke-width="1.600"/></g></svg>
<span class="t" style="left:23.5px;top:991.6px;font-size:12px;color:#ffffff;line-height:14.4px;letter-spacing:0.07px;font-weight:bold;">Model</span>
<span class="t" style="left:81.5px;top:991.6px;font-size:12px;color:#d8d8d8;line-height:14.4px;letter-spacing:-0.24px;">Layout1</span>
<svg class="b" style="left:0;top:988px" width="1900" height="29" viewBox="0 988 1900 29"><rect x="1337.5" y="990.500" width="48" height="24" fill="#4f4f4f" stroke="#6a6a6a" stroke-width="1"/><rect x="1387.5" y="990.500" width="64" height="24" fill="#4f4f4f" stroke="#6a6a6a" stroke-width="1"/><rect x="1453.5" y="990.500" width="102" height="24" fill="#4f4f4f" stroke="#6a6a6a" stroke-width="1"/><rect x="1557.5" y="990.500" width="63" height="24" fill="#4f4f4f" stroke="#6a6a6a" stroke-width="1"/><rect x="1622.5" y="990.500" width="106" height="24" fill="#4f4f4f" stroke="#6a6a6a" stroke-width="1"/><rect x="1730.5" y="990.500" width="39" height="24" fill="#4f4f4f" stroke="#6a6a6a" stroke-width="1"/><rect x="1770.5" y="990.500" width="25" height="24" fill="#4f4f4f" stroke="#6a6a6a" stroke-width="1"/><rect x="1797.5" y="990.500" width="25" height="24" fill="#4f4f4f" stroke="#6a6a6a" stroke-width="1"/><rect x="1824.5" y="990.500" width="23" height="24" fill="#4f4f4f" stroke="#6a6a6a" stroke-width="1"/><rect x="1849.5" y="990.500" width="49" height="24" fill="#4f4f4f" stroke="#6a6a6a" stroke-width="1"/><rect x="1455" y="991.500" width="22" height="22" fill="#5b8cc6"/><rect x="1558" y="991.500" width="22" height="22" fill="#5b8cc6"/><rect x="1582" y="991.500" width="22" height="22" fill="#5b8cc6"/><rect x="1624" y="991.500" width="23" height="22" fill="#5b8cc6"/><path d="M1392 999.500 h16 M1392 1005.500 h16 M1397 994.500 v16 M1403 994.500 v16" stroke="#eeeeee" stroke-width="1.300"/><path d="M1418 997 h13 M1418 1002.500 h13 M1418 1008 h13" stroke="#eeeeee" stroke-width="2" stroke-dasharray="2 3.500"/><path d="M1440 1000.500 h7 l-3.500 4z" fill="#eeeeee"/><path d="M1460.500 995 v14.500 h14 M1460.500 1003 h6 v6" stroke="#eeeeee" stroke-width="1.400" fill="none"/><circle cx="1489" cy="1003" r="6.500" fill="none" stroke="#eeeeee" stroke-width="1.300"/><path d="M1489 1003 h10 M1489 1003 l8 -6" stroke="#eeeeee" stroke-width="1.200"/><path d="M1506 1000.500 h7 l-3.500 4z" fill="#eeeeee"/><path d="M1529 995 v16" stroke="#5ad05a" stroke-width="1.300"/><path d="M1522 996 l13 14" stroke="#c8643a" stroke-width="1.300"/><rect x="1527" y="1001" width="3.500" height="3.500" fill="none" stroke="#eee"/><path d="M1545 1000.500 h7 l-3.500 4z" fill="#eeeeee"/><path d="M1561 1009.500 h16 M1562 1009.500 l13 -12" stroke="#eeeeee" stroke-width="1.500"/><rect x="1586.500" y="998.500" width="13" height="12" fill="none" stroke="#eeeeee" stroke-width="1.400"/><rect x="1584.500" y="996.500" width="4" height="4" fill="#5b8cc6" stroke="#eeeeee"/><path d="M1609 1000.500 h7 l-3.500 4z" fill="#eeeeee"/><path d="M1634 994.500 L1636.2 1003 L1641 1011 L1634 1007.500 L1627 1011 L1631.8 1003 Z" fill="#eeeeee"/><circle cx="1641.500" cy="996.500" r="2" fill="none" stroke="#eeeeee"/><path d="M1659 994.500 L1661.2 1003 L1666 1011 L1659 1007.500 L1652 1011 L1656.8 1003 Z" fill="#cfcfcf"/><path d="M1665 994 l-2 4 h3 l-2 3" stroke="#cfcfcf" fill="none"/><path d="M1683 994.500 L1685.2 1003 L1690 1011 L1683 1007.500 L1676 1011 L1680.8 1003 Z" fill="#cfcfcf"/><path d="M1717 1000.500 h7 l-3.500 4z" fill="#eeeeee"/><circle cx="1742.500" cy="1002.500" r="4.300" fill="none" stroke="#dcdcdc" stroke-width="3.200"/><circle cx="1742.500" cy="1002.500" r="6.800" fill="none" stroke="#dcdcdc" stroke-width="2.400" stroke-dasharray="2.670 2.670"/><path d="M1759 1000.500 h7 l-3.500 4z" fill="#eeeeee"/><path d="M1775 1003 h16 M1783 995 v16" stroke="#eeeeee" stroke-width="1.800"/><rect x="1802.500" y="995.500" width="6" height="6" fill="none" stroke="#eeeeee"/><circle cx="1815" cy="1001.500" r="3" fill="none" stroke="#eeeeee"/><path d="M1805.500 1010.500 l3 -5 l3 5z" fill="none" stroke="#eeeeee"/><rect x="1829" y="996" width="11" height="10" fill="#62b5ee"/><rect x="1829" y="1005" width="7" height="4" fill="#f3c574"/><path d="M1836 1007 l2 2.500 l4.500 -5" stroke="#1db36a" stroke-width="1.800" fill="none"/><rect x="1854.500" y="997.500" width="15" height="11" fill="none" stroke="#eeeeee" stroke-width="1.200"/><path d="M1857 1006 l3 -3 M1857 1003.500 v2.500 h2.500 M1867 1000 l-3 3 M1867 1002.500 v-2.500 h-2.500" stroke="#eeeeee" fill="none"/><path d="M1878 997.500 h16 M1878 1003 h16 M1878 1008.500 h16" stroke="#eeeeee" stroke-width="1.800"/></svg>
<span class="t" style="left:1341.5px;top:996.1px;font-size:12px;color:#f0f0f0;line-height:14.4px;letter-spacing:-0.33px;">MODEL</span>
<span class="t" style="left:1699.0px;top:996.7px;font-size:11px;color:#f4f4f4;line-height:13.2px;letter-spacing:-0.26px;">1:1</span>
<div class="b" style="left:0px;top:1018px;width:1901px;height:1px;background:#6a2a1c;"></div>
<div class="b" style="left:1900px;top:0px;width:1px;height:1019px;background:#5a2418;"></div>
</div>
<div class="b" style="left:1901px;top:0px;width:6px;height:1020px;background:#1c1c1e;"></div>
<div class="b" style="left:0px;top:1019px;width:1907px;height:1px;background:#222226;"></div>
<div class="b" style="left:1901px;top:28px;width:6px;height:48px;background:#2b2d33;"></div>
<div class="b" style="left:1901px;top:76px;width:6px;height:46px;background:#18181a;"></div>
</body></html>
